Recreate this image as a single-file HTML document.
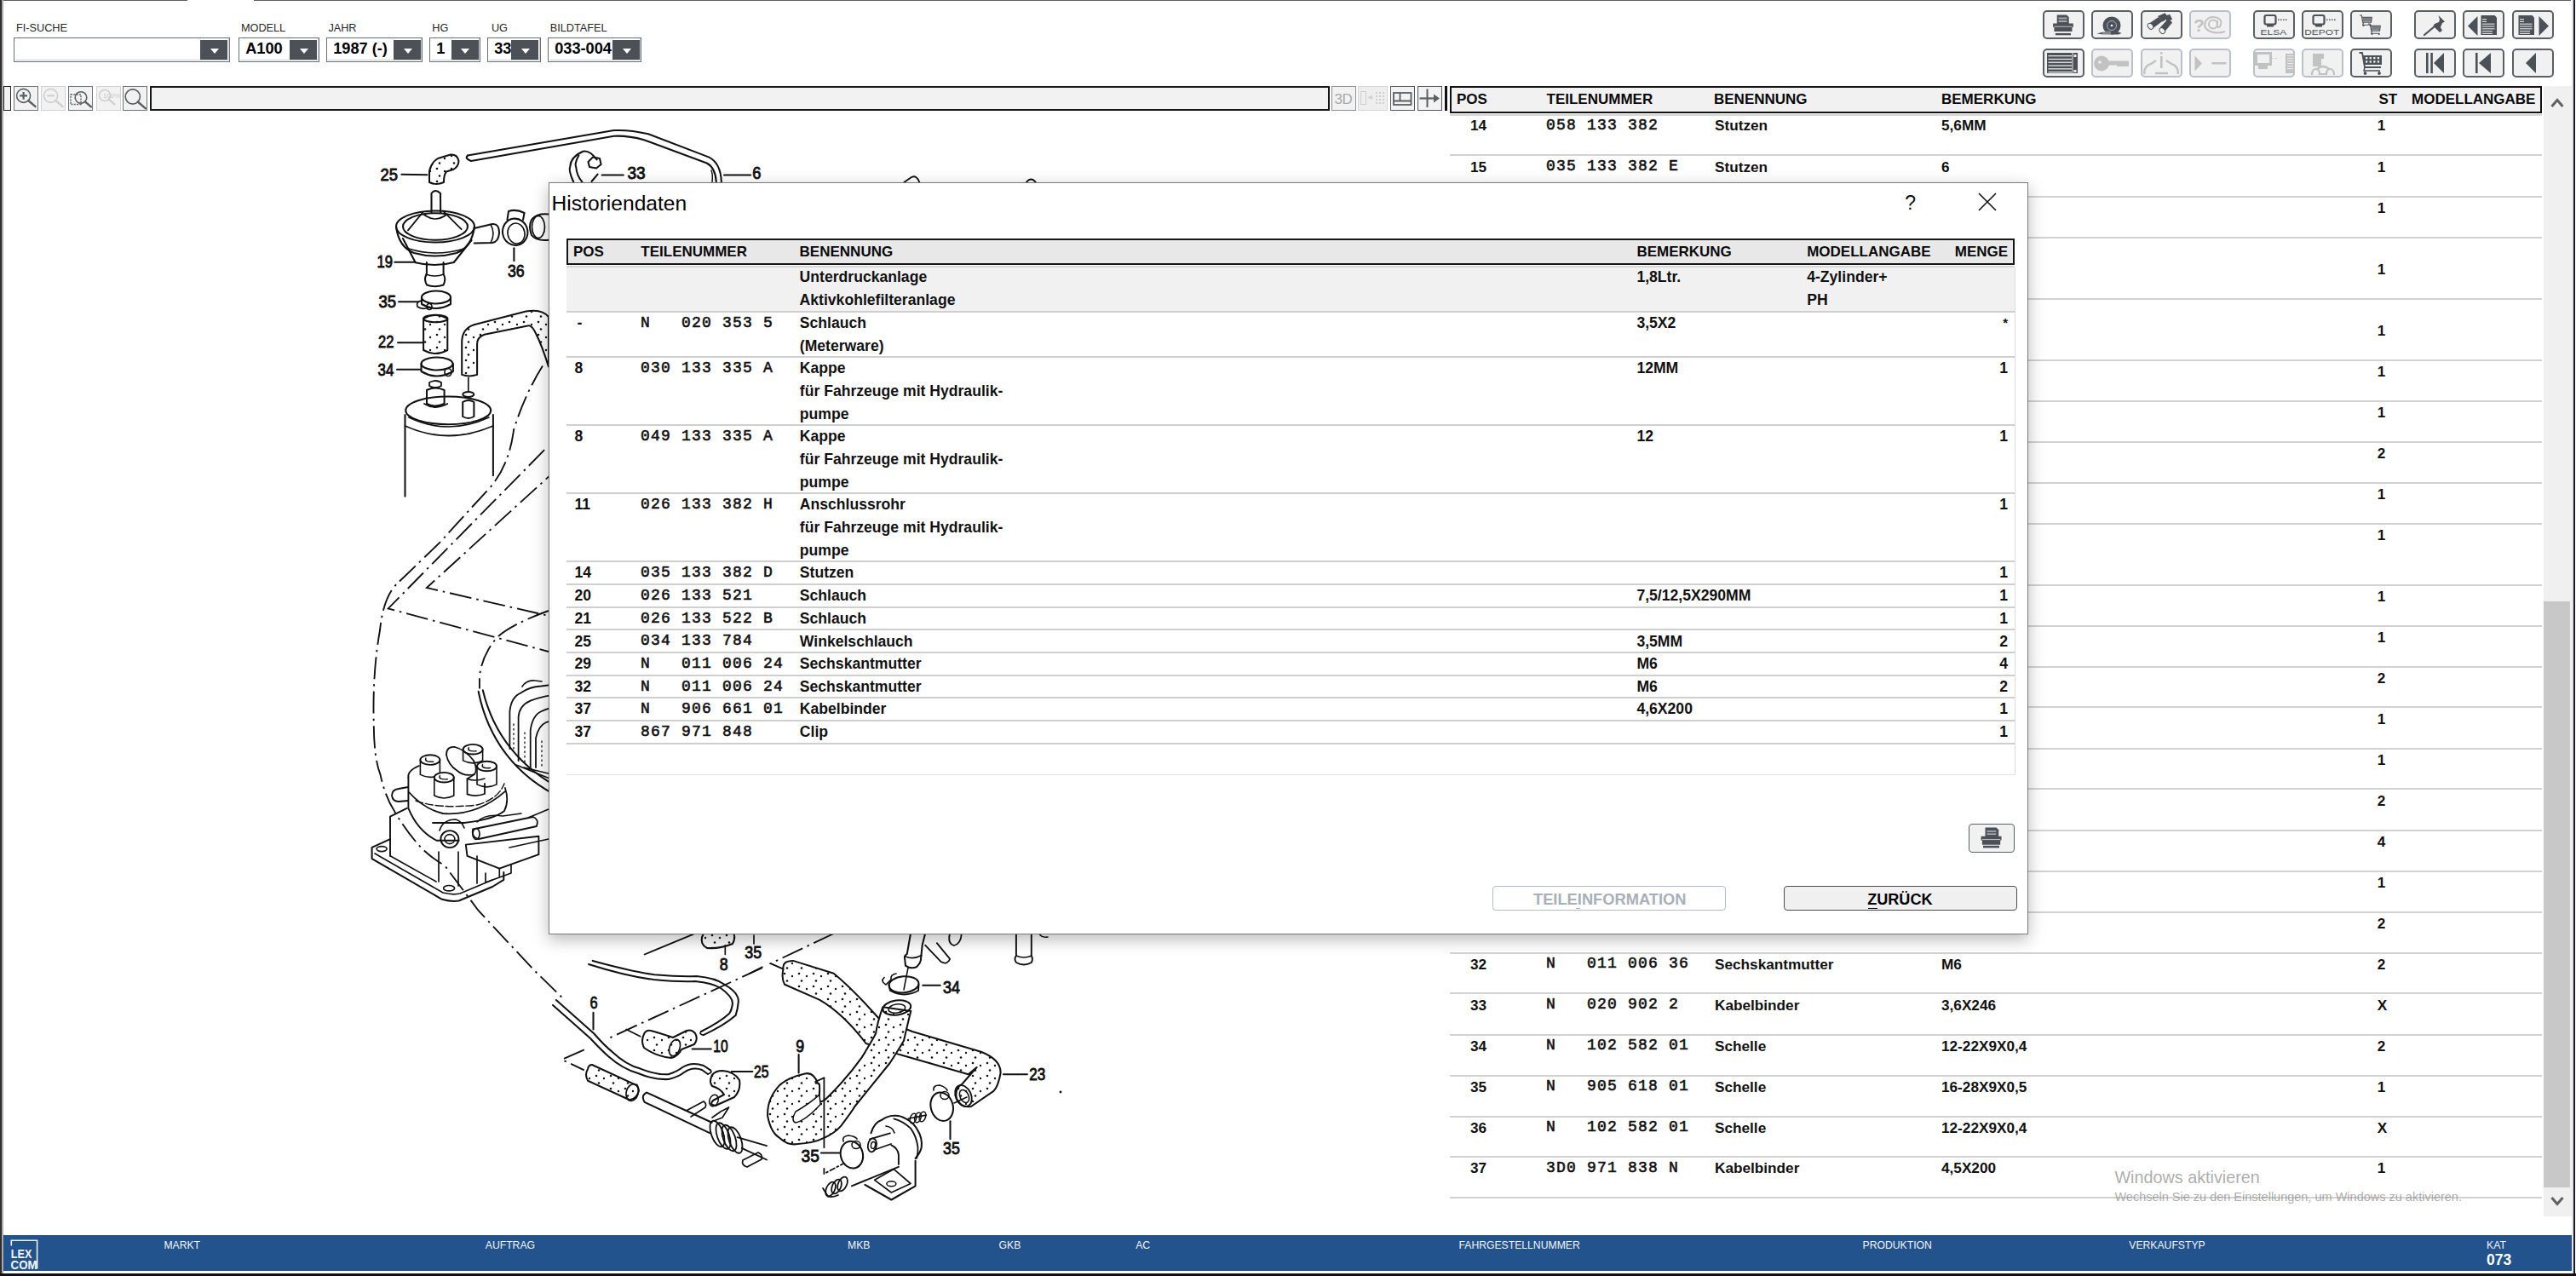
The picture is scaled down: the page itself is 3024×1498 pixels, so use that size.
<!DOCTYPE html>
<html><head><meta charset="utf-8"><title>Historiendaten</title>
<style>
html,body{margin:0;padding:0;background:#fff;}
body{width:3024px;height:1498px;position:relative;overflow:hidden;font-family:'Liberation Sans', sans-serif;}
body>div, body>svg, .a{position:absolute;}
body div{position:absolute;}
</style></head><body>
<div style="left:0px;top:0px;width:2px;height:1495px;background:#2e2e2e"></div><div style="left:2px;top:0px;width:2px;height:1495px;background:#a9a9a9"></div><div style="left:4px;top:0px;width:216px;height:1.3px;background:#5c6064"></div><div style="left:298px;top:0px;width:2720px;height:1.3px;background:#5c6064"></div><div style="left:3018.5px;top:0px;width:2.5px;height:1495px;background:#e4e4e4"></div><div style="left:3021px;top:0px;width:2px;height:1495px;background:#1b1b28"></div><div style="left:0px;top:1495px;width:3024px;height:3px;background:#111"></div><div style="left:19.00px;top:27.45px;font:400 12.7px/12.7px 'Liberation Sans', sans-serif;color:#262626;white-space:pre;">FI-SUCHE</div><div style="left:283.00px;top:27.45px;font:400 12.7px/12.7px 'Liberation Sans', sans-serif;color:#262626;white-space:pre;">MODELL</div><div style="left:385.40px;top:27.45px;font:400 12.7px/12.7px 'Liberation Sans', sans-serif;color:#262626;white-space:pre;">JAHR</div><div style="left:507.30px;top:27.45px;font:400 12.7px/12.7px 'Liberation Sans', sans-serif;color:#262626;white-space:pre;">HG</div><div style="left:576.90px;top:27.45px;font:400 12.7px/12.7px 'Liberation Sans', sans-serif;color:#262626;white-space:pre;">UG</div><div style="left:645.80px;top:27.45px;font:400 12.7px/12.7px 'Liberation Sans', sans-serif;color:#262626;white-space:pre;">BILDTAFEL</div><div style="left:16px;top:43.8px;width:254px;height:29px;border:1.5px solid #6b7074;background:#fff;box-sizing:border-box"></div><div style="left:17.5px;top:45.3px;width:251px;height:26px;border-right:1px solid #cfd2d5;border-bottom:1px solid #cfd2d5;box-sizing:border-box"></div><div style="left:235px;top:46.6px;width:32px;height:23.3px;background:#4b5157"></div><svg style="position:absolute;left:246.7px;top:56.9px;" width="10" height="6" viewBox="0 0 10 6"><path d="M0 0H10L5 6Z" fill="#fff"/></svg><div style="left:280px;top:43.8px;width:95px;height:29px;border:1.5px solid #6b7074;background:#fff;box-sizing:border-box"></div><div style="left:281.5px;top:45.3px;width:92px;height:26px;border-right:1px solid #cfd2d5;border-bottom:1px solid #cfd2d5;box-sizing:border-box"></div><div style="left:281.5px;top:45px;width:58.80000000000001px;height:26px;overflow:hidden"><div style="left:6.7px;top:2.99px;font:700 18.2px/18.2px 'Liberation Sans', sans-serif;color:#000;white-space:pre">A100</div></div><div style="left:340.3px;top:46.6px;width:32px;height:23.3px;background:#4b5157"></div><svg style="position:absolute;left:352.0px;top:56.9px;" width="10" height="6" viewBox="0 0 10 6"><path d="M0 0H10L5 6Z" fill="#fff"/></svg><div style="left:383px;top:43.8px;width:113px;height:29px;border:1.5px solid #6b7074;background:#fff;box-sizing:border-box"></div><div style="left:384.5px;top:45.3px;width:110px;height:26px;border-right:1px solid #cfd2d5;border-bottom:1px solid #cfd2d5;box-sizing:border-box"></div><div style="left:384.5px;top:45px;width:77.5px;height:26px;overflow:hidden"><div style="left:6.7px;top:2.99px;font:700 18.2px/18.2px 'Liberation Sans', sans-serif;color:#000;white-space:pre">1987 (-)</div></div><div style="left:462px;top:46.6px;width:32px;height:23.3px;background:#4b5157"></div><svg style="position:absolute;left:473.7px;top:56.9px;" width="10" height="6" viewBox="0 0 10 6"><path d="M0 0H10L5 6Z" fill="#fff"/></svg><div style="left:504px;top:43.8px;width:60px;height:29px;border:1.5px solid #6b7074;background:#fff;box-sizing:border-box"></div><div style="left:505.5px;top:45.3px;width:57px;height:26px;border-right:1px solid #cfd2d5;border-bottom:1px solid #cfd2d5;box-sizing:border-box"></div><div style="left:505.5px;top:45px;width:24.0px;height:26px;overflow:hidden"><div style="left:6.7px;top:2.99px;font:700 18.2px/18.2px 'Liberation Sans', sans-serif;color:#000;white-space:pre">1</div></div><div style="left:529.5px;top:46.6px;width:32px;height:23.3px;background:#4b5157"></div><svg style="position:absolute;left:541.2px;top:56.9px;" width="10" height="6" viewBox="0 0 10 6"><path d="M0 0H10L5 6Z" fill="#fff"/></svg><div style="left:572px;top:43.8px;width:63px;height:29px;border:1.5px solid #6b7074;background:#fff;box-sizing:border-box"></div><div style="left:573.5px;top:45.3px;width:60px;height:26px;border-right:1px solid #cfd2d5;border-bottom:1px solid #cfd2d5;box-sizing:border-box"></div><div style="left:573.5px;top:45px;width:26.5px;height:26px;overflow:hidden"><div style="left:6.7px;top:2.99px;font:700 18.2px/18.2px 'Liberation Sans', sans-serif;color:#000;white-space:pre">33</div></div><div style="left:600px;top:46.6px;width:32px;height:23.3px;background:#4b5157"></div><svg style="position:absolute;left:611.7px;top:56.9px;" width="10" height="6" viewBox="0 0 10 6"><path d="M0 0H10L5 6Z" fill="#fff"/></svg><div style="left:643px;top:43.8px;width:110px;height:29px;border:1.5px solid #6b7074;background:#fff;box-sizing:border-box"></div><div style="left:644.5px;top:45.3px;width:107px;height:26px;border-right:1px solid #cfd2d5;border-bottom:1px solid #cfd2d5;box-sizing:border-box"></div><div style="left:644.5px;top:45px;width:74.5px;height:26px;overflow:hidden"><div style="left:6.7px;top:2.99px;font:700 18.2px/18.2px 'Liberation Sans', sans-serif;color:#000;white-space:pre">033-004</div></div><div style="left:719px;top:46.6px;width:32px;height:23.3px;background:#4b5157"></div><svg style="position:absolute;left:730.7px;top:56.9px;" width="10" height="6" viewBox="0 0 10 6"><path d="M0 0H10L5 6Z" fill="#fff"/></svg><div style="left:4.4px;top:101.3px;width:9px;height:28.4px;border:1.3px solid #222;background:#f2f2f2;box-sizing:border-box"></div><div style="left:16.4px;top:101.3px;width:29px;height:28.4px;border:1.5px solid #6e7377;background:#f2f2f2;box-sizing:border-box"></div><div style="left:48.3px;top:101.3px;width:29px;height:28.4px;border:1.5px solid #d2d2d2;background:#f2f2f2;box-sizing:border-box"></div><div style="left:80.4px;top:101.3px;width:29px;height:28.4px;border:1.5px solid #6e7377;background:#f2f2f2;box-sizing:border-box"></div><div style="left:112.5px;top:101.3px;width:29px;height:28.4px;border:1.5px solid #d2d2d2;background:#f2f2f2;box-sizing:border-box"></div><div style="left:144.2px;top:101.3px;width:29px;height:28.4px;border:1.5px solid #6e7377;background:#f2f2f2;box-sizing:border-box"></div><svg style="position:absolute;left:16.4px;top:101.3px;" width="29" height="28.4" viewBox="0 0 29 28.4"><circle cx="11.6" cy="11.4" r="8" fill="none" stroke="#5a5f63" stroke-width="1.6"/><path d="M17.2 17.0L25.6 24.2" stroke="#5a5f63" stroke-width="2.4" stroke-linecap="round"/><path d="M7.2 11.4H16M11.6 7V15.8" stroke="#5a5f63" stroke-width="2.2"/></svg><svg style="position:absolute;left:48.3px;top:101.3px;" width="29" height="28.4" viewBox="0 0 29 28.4"><circle cx="11.6" cy="11.4" r="8" fill="none" stroke="#cfcfcf" stroke-width="1.6"/><path d="M17.2 17.0L25.6 24.2" stroke="#cfcfcf" stroke-width="2.4" stroke-linecap="round"/><path d="M7.2 11.4H16" stroke="#cfcfcf" stroke-width="2"/></svg><svg style="position:absolute;left:80.4px;top:101.3px;" width="29" height="28.4" viewBox="0 0 29 28.4"><circle cx="15" cy="13.5" r="6.8" fill="none" stroke="#5a5f63" stroke-width="1.6"/><path d="M19.8 18.3L26.9 24.4" stroke="#5a5f63" stroke-width="2.4" stroke-linecap="round"/><rect x="3" y="10" width="12" height="11.5" fill="none" stroke="#5a5f63" stroke-width="1.4" stroke-dasharray="2 1.3"/></svg><svg style="position:absolute;left:112.5px;top:101.3px;" width="29" height="28.4" viewBox="0 0 29 28.4"><circle cx="10" cy="11" r="6.5" fill="none" stroke="#d0d0d0" stroke-width="1.6"/><path d="M14.6 15.6L21.4 21.4" stroke="#d0d0d0" stroke-width="2.4" stroke-linecap="round"/><text x="8" y="14.5" font-family="Liberation Sans" font-size="8" fill="#c8c8c8">100%</text></svg><svg style="position:absolute;left:144.2px;top:101.3px;" width="29" height="28.4" viewBox="0 0 29 28.4"><circle cx="11.8" cy="12.5" r="8.6" fill="none" stroke="#5a5f63" stroke-width="1.6"/><path d="M17.8 18.5L26.9 26.3" stroke="#5a5f63" stroke-width="2.4" stroke-linecap="round"/></svg><div style="left:176.3px;top:101.3px;width:1385px;height:28.4px;border:2px solid #151515;background:#f2f2f2;box-sizing:border-box"></div><div style="left:1563px;top:101.3px;width:29px;height:28.4px;border:1.5px solid #8e9194;background:#f2f2f2;box-sizing:border-box"></div><svg style="position:absolute;left:1563px;top:101.3px;" width="29" height="28.4" viewBox="0 0 29 28.4"><text x="3.5" y="21" font-family="Liberation Sans" font-size="17" fill="#a7a9ab" style="letter-spacing:-0.5px">3D</text></svg><div style="left:1594px;top:101.3px;width:35px;height:28.4px;border:1.5px solid #d6d6d6;background:#eeeeee;box-sizing:border-box"></div><svg style="position:absolute;left:1594px;top:101.3px;" width="35" height="28.4" viewBox="0 0 35 28.4"><rect x="3.5" y="6.5" width="6" height="15" fill="none" stroke="#cfcfcf" stroke-width="1"/><path d="M12 13.5H16M15 11.5L17 13.5L15 15.5" stroke="#cfcfcf" stroke-width="1.4" fill="none"/><rect x="21" y="7" width="2" height="2" fill="#cfcfcf"/><rect x="21" y="11" width="2" height="2" fill="#cfcfcf"/><rect x="21" y="15" width="2" height="2" fill="#cfcfcf"/><rect x="21" y="19" width="2" height="2" fill="#cfcfcf"/><rect x="25" y="7" width="2" height="2" fill="#cfcfcf"/><rect x="25" y="11" width="2" height="2" fill="#cfcfcf"/><rect x="25" y="15" width="2" height="2" fill="#cfcfcf"/><rect x="25" y="19" width="2" height="2" fill="#cfcfcf"/><rect x="29" y="7" width="2" height="2" fill="#cfcfcf"/><rect x="29" y="11" width="2" height="2" fill="#cfcfcf"/><rect x="29" y="15" width="2" height="2" fill="#cfcfcf"/><rect x="29" y="19" width="2" height="2" fill="#cfcfcf"/></svg><div style="left:1632px;top:101.3px;width:29px;height:28.4px;border:1.5px solid #55595d;background:#f2f2f2;box-sizing:border-box"></div><svg style="position:absolute;left:1632px;top:101.3px;" width="29" height="28.4" viewBox="0 0 29 28.4"><rect x="4" y="8" width="20.5" height="14" fill="none" stroke="#5a5f63" stroke-width="1.8"/><path d="M4 17.5H24.5M11.5 8V17.5" stroke="#5a5f63" stroke-width="1.8"/></svg><div style="left:1664px;top:101.3px;width:29px;height:28.4px;border:1.5px solid #55595d;background:#f2f2f2;box-sizing:border-box"></div><svg style="position:absolute;left:1664px;top:101.3px;" width="29" height="28.4" viewBox="0 0 29 28.4"><path d="M11.5 3.5V25" stroke="#5a5f63" stroke-width="2"/><path d="M2.5 14.5H21" stroke="#5a5f63" stroke-width="2.2"/><path d="M19 9.5L26 14.5L19 19.5Z" fill="#5a5f63"/></svg><div style="left:1695.5px;top:101.3px;width:3px;height:28.4px;background:#111"></div><div style="left:2397.5px;top:11.7px;width:49px;height:34.3px;border:2px solid #5b6065;border-radius:5px;background:#f1f1f1;box-sizing:border-box"></div><svg style="position:absolute;left:2397.5px;top:11.7px;" width="49" height="34.3" viewBox="0 0 49 34.3"><path d="M16.7 5.4H28L30.7 8V16.6H16.7Z" fill="#4b5157"/><rect x="18.5" y="8.5" width="10" height="2" fill="#a5a9ad"/><rect x="18.5" y="12" width="10" height="2" fill="#a5a9ad"/><path d="M12.1 15.5H35.8V20H34.5V25H13.4V20H12.1Z" fill="#4b5157"/><path d="M13.4 19.2H34.5" stroke="#cfd1d3" stroke-width="0.9"/><rect x="14.9" y="26.9" width="18.1" height="2.4" fill="#4b5157"/></svg><div style="left:2455px;top:11.7px;width:49px;height:34.3px;border:2px solid #5b6065;border-radius:5px;background:#f1f1f1;box-sizing:border-box"></div><svg style="position:absolute;left:2455px;top:11.7px;" width="49" height="34.3" viewBox="0 0 49 34.3"><circle cx="24" cy="18" r="10.5" fill="#4b5157"/><circle cx="24" cy="18" r="5.5" fill="none" stroke="#b9bcbf" stroke-width="0.9"/><circle cx="24" cy="18" r="1.3" fill="#fff"/><path d="M6.5 27.5L14 25.5H32L35.5 27L32 28.5H14Z" fill="#4b5157"/><path d="M14 24.5V30.5" stroke="#e8e8e8" stroke-width="0.7"/><path d="M16 24.5V30.5" stroke="#e8e8e8" stroke-width="0.7"/><path d="M18 24.5V30.5" stroke="#e8e8e8" stroke-width="0.7"/><path d="M20 24.5V30.5" stroke="#e8e8e8" stroke-width="0.7"/><path d="M22 24.5V30.5" stroke="#e8e8e8" stroke-width="0.7"/></svg><div style="left:2512.5px;top:11.7px;width:49px;height:34.3px;border:2px solid #5b6065;border-radius:5px;background:#f1f1f1;box-sizing:border-box"></div><svg style="position:absolute;left:2512.5px;top:11.7px;" width="49" height="34.3" viewBox="0 0 49 34.3"><g transform="translate(1 -3.5) scale(0.95)"><path d="M8 21L21 12L26 17L14 26Z" fill="#4b5157"/><path d="M23 25L33 14L38 19L28 31Z" fill="#4b5157"/><path d="M20 11L29 7L33 13L26 18Z" fill="#4b5157"/><path d="M27 11L35 9L38 15L32 18Z" fill="#4b5157"/><ellipse cx="11" cy="23.5" rx="3" ry="4" transform="rotate(-40 11 23.5)" fill="#f1f1f1" stroke="#4b5157" stroke-width="1"/><ellipse cx="25.5" cy="29" rx="3" ry="4" transform="rotate(-40 25.5 29)" fill="#f1f1f1" stroke="#4b5157" stroke-width="1"/></g></svg><div style="left:2570px;top:11.7px;width:49px;height:34.3px;border:2px solid #b9c0c8;border-radius:5px;background:#f1f1f1;box-sizing:border-box"></div><svg style="position:absolute;left:2570px;top:11.7px;" width="49" height="34.3" viewBox="0 0 49 34.3"><text x="5" y="25" font-family="Liberation Sans" font-size="21" font-weight="700" fill="#c2c2c2">?</text><circle cx="28" cy="16.5" r="5" fill="none" stroke="#c2c2c2" stroke-width="2"/><path d="M33 12V19Q34 21 36 19Q40 12 33 9Q24 6 19 13Q16 22 25 25Q33 28 42 25" fill="none" stroke="#c2c2c2" stroke-width="2"/></svg><div style="left:2644.5px;top:11.7px;width:49px;height:34.3px;border:2px solid #5b6065;border-radius:5px;background:#f1f1f1;box-sizing:border-box"></div><svg style="position:absolute;left:2644.5px;top:11.7px;" width="49" height="34.3" viewBox="0 0 49 34.3"><rect x="13.5" y="6" width="13" height="10.5" rx="2" fill="none" stroke="#4b5157" stroke-width="2.2"/><rect x="16" y="17" width="8" height="2.5" fill="#4b5157"/><rect x="29" y="10.5" width="1.6" height="1.4" fill="#4b5157"/><rect x="32" y="10.5" width="1.6" height="1.4" fill="#4b5157"/><rect x="35" y="10.5" width="1.6" height="1.4" fill="#4b5157"/><rect x="38" y="10.5" width="1.6" height="1.4" fill="#4b5157"/><text x="8.6" y="29" font-family="Liberation Sans" font-size="9" fill="#4b5157" textLength="30.6" lengthAdjust="spacingAndGlyphs">ELSA</text></svg><div style="left:2702px;top:11.7px;width:49px;height:34.3px;border:2px solid #5b6065;border-radius:5px;background:#f1f1f1;box-sizing:border-box"></div><svg style="position:absolute;left:2702px;top:11.7px;" width="49" height="34.3" viewBox="0 0 49 34.3"><rect x="13.5" y="6" width="13" height="10.5" rx="2" fill="none" stroke="#4b5157" stroke-width="2.2"/><rect x="16" y="17" width="8" height="2.5" fill="#4b5157"/><rect x="29" y="10.5" width="1.6" height="1.4" fill="#4b5157"/><rect x="32" y="10.5" width="1.6" height="1.4" fill="#4b5157"/><rect x="35" y="10.5" width="1.6" height="1.4" fill="#4b5157"/><rect x="38" y="10.5" width="1.6" height="1.4" fill="#4b5157"/><text x="3.2" y="29" font-family="Liberation Sans" font-size="9" fill="#4b5157" textLength="41" lengthAdjust="spacingAndGlyphs">DEPOT</text></svg><div style="left:2759px;top:11.7px;width:49px;height:34.3px;border:2px solid #5b6065;border-radius:5px;background:#f1f1f1;box-sizing:border-box"></div><svg style="position:absolute;left:2759px;top:11.7px;" width="49" height="34.3" viewBox="0 0 49 34.3"><g transform="translate(11 6) scale(0.75)"><path d="M0 0H3L5 11H18L19 3H4" fill="none" stroke="#4b5157" stroke-width="1.6"/><rect x="5" y="3" width="13" height="7" fill="#4b5157" opacity="0.7"/><path d="M6 11L5 15H18" fill="none" stroke="#4b5157" stroke-width="1.5"/><circle cx="6" cy="16" r="1.4" fill="#4b5157"/><circle cx="17" cy="16" r="1.4" fill="#4b5157"/></g><g transform="translate(21 16) scale(0.75)"><path d="M0 0H3L5 11H18L19 3H4" fill="none" stroke="#4b5157" stroke-width="1.6"/><rect x="5" y="3" width="13" height="7" fill="#4b5157" opacity="0.7"/><path d="M6 11L5 15H18" fill="none" stroke="#4b5157" stroke-width="1.5"/><circle cx="6" cy="16" r="1.4" fill="#4b5157"/><circle cx="17" cy="16" r="1.4" fill="#4b5157"/></g></svg><div style="left:2834px;top:11.7px;width:49px;height:34.3px;border:2px solid #5b6065;border-radius:5px;background:#f1f1f1;box-sizing:border-box"></div><svg style="position:absolute;left:2834px;top:11.7px;" width="49" height="34.3" viewBox="0 0 49 34.3"><path d="M28.5 6L36 13.5L33 15L31 20L33 24L30 26L22.5 18.5L24 16L29 14L30 11Z" fill="#4b5157"/><path d="M12 29L24 19" stroke="#4b5157" stroke-width="2.2" stroke-linecap="round"/></svg><div style="left:2891px;top:11.7px;width:49px;height:34.3px;border:2px solid #5b6065;border-radius:5px;background:#f1f1f1;box-sizing:border-box"></div><svg style="position:absolute;left:2891px;top:11.7px;" width="49" height="34.3" viewBox="0 0 49 34.3"><path d="M17.5 7V30L6 18.5Z" fill="#4b5157"/><path d="M21.5 6H37.5 L40.0 8.5V29H21.5Z" fill="#4b5157"/><rect x="23.0" y="10.0" width="5" height="1.2" fill="#d9dadb"/><rect x="23.0" y="12.8" width="5" height="1.2" fill="#d9dadb"/><rect x="23.0" y="15.6" width="14.5" height="1.2" fill="#d9dadb"/><rect x="23.0" y="18.4" width="14.5" height="1.2" fill="#d9dadb"/><rect x="23.0" y="21.2" width="14.5" height="1.2" fill="#d9dadb"/><rect x="23.0" y="24.0" width="12" height="1.2" fill="#d9dadb"/><rect x="23.0" y="26.8" width="12" height="1.2" fill="#d9dadb"/></svg><div style="left:2949px;top:11.7px;width:49px;height:34.3px;border:2px solid #5b6065;border-radius:5px;background:#f1f1f1;box-sizing:border-box"></div><svg style="position:absolute;left:2949px;top:11.7px;" width="49" height="34.3" viewBox="0 0 49 34.3"><path d="M7.5 6H23.5 L26.0 8.5V29H7.5Z" fill="#4b5157"/><rect x="9.0" y="10.0" width="5" height="1.2" fill="#d9dadb"/><rect x="9.0" y="12.8" width="5" height="1.2" fill="#d9dadb"/><rect x="9.0" y="15.6" width="14.5" height="1.2" fill="#d9dadb"/><rect x="9.0" y="18.4" width="14.5" height="1.2" fill="#d9dadb"/><rect x="9.0" y="21.2" width="14.5" height="1.2" fill="#d9dadb"/><rect x="9.0" y="24.0" width="12" height="1.2" fill="#d9dadb"/><rect x="9.0" y="26.8" width="12" height="1.2" fill="#d9dadb"/><path d="M31.5 7V30L43 18.5Z" fill="#4b5157"/></svg><div style="left:2397.5px;top:57.2px;width:49px;height:34.3px;border:2px solid #5b6065;border-radius:5px;background:#f1f1f1;box-sizing:border-box"></div><svg style="position:absolute;left:2397.5px;top:57.2px;" width="49" height="34.3" viewBox="0 0 49 34.3"><rect x="5" y="5" width="36" height="24" fill="#4b5157"/><rect x="6.5" y="8.0" width="27.5" height="1.3" fill="#e8e8e8"/><rect x="6.5" y="11.8" width="27.5" height="1.3" fill="#e8e8e8"/><rect x="6.5" y="15.6" width="27.5" height="1.3" fill="#e8e8e8"/><rect x="6.5" y="19.4" width="27.5" height="1.3" fill="#e8e8e8"/><rect x="6.5" y="23.2" width="27.5" height="1.3" fill="#e8e8e8"/><rect x="6.5" y="27.0" width="27.5" height="1.3" fill="#e8e8e8"/><rect x="34.5" y="5" width="1" height="24" fill="#e8e8e8"/><rect x="36.5" y="7" width="3" height="3" fill="#e8e8e8"/><rect x="36.5" y="25" width="3" height="3" fill="#e8e8e8"/></svg><div style="left:2455px;top:57.2px;width:49px;height:34.3px;border:2px solid #b9c0c8;border-radius:5px;background:#f1f1f1;box-sizing:border-box"></div><svg style="position:absolute;left:2455px;top:57.2px;" width="49" height="34.3" viewBox="0 0 49 34.3"><circle cx="12" cy="17.5" r="9" fill="#c2c2c2"/><circle cx="10" cy="16" r="1.8" fill="#f1f1f1"/><rect x="19" y="14.5" width="25" height="5" fill="#c2c2c2"/><rect x="30" y="19" width="14" height="2" fill="#c2c2c2"/></svg><div style="left:2512.5px;top:57.2px;width:49px;height:34.3px;border:2px solid #b9c0c8;border-radius:5px;background:#f1f1f1;box-sizing:border-box"></div><svg style="position:absolute;left:2512.5px;top:57.2px;" width="49" height="34.3" viewBox="0 0 49 34.3"><path d="M4 30Q4 20 12 18L18 14M44 30Q44 20 36 18L30 14M17 29H32" fill="none" stroke="#c2c2c2" stroke-width="2.4"/><rect x="23" y="9" width="2.6" height="14" fill="#c2c2c2"/><circle cx="24.3" cy="5.5" r="1.4" fill="#c2c2c2"/></svg><div style="left:2570px;top:57.2px;width:49px;height:34.3px;border:2px solid #b9c0c8;border-radius:5px;background:#f1f1f1;box-sizing:border-box"></div><svg style="position:absolute;left:2570px;top:57.2px;" width="49" height="34.3" viewBox="0 0 49 34.3"><path d="M6.5 8.5L15 17.5L6.5 26.5Z" fill="#c2c2c2"/><rect x="26.5" y="16" width="17" height="2.5" fill="#c2c2c2"/></svg><div style="left:2644.5px;top:57.2px;width:49px;height:34.3px;border:2px solid #b9c0c8;border-radius:5px;background:#f1f1f1;box-sizing:border-box"></div><svg style="position:absolute;left:2644.5px;top:57.2px;" width="49" height="34.3" viewBox="0 0 49 34.3"><rect x="3.5" y="5.5" width="17" height="13" fill="none" stroke="#c2c2c2" stroke-width="3"/><rect x="6" y="18" width="11" height="6" fill="#c2c2c2"/><rect x="38" y="6" width="11" height="23" fill="#c2c2c2"/><rect x="40" y="8" width="7" height="1.2" fill="#e8e8e8"/><rect x="40" y="11" width="7" height="1.2" fill="#e8e8e8"/><rect x="40" y="14" width="7" height="1.2" fill="#e8e8e8"/><rect x="40" y="17" width="7" height="1.2" fill="#e8e8e8"/><rect x="40" y="20" width="7" height="1.2" fill="#e8e8e8"/><rect x="40" y="23" width="7" height="1.2" fill="#e8e8e8"/><rect x="22" y="11" width="1.5" height="1" fill="#c2c2c2"/><rect x="26" y="11" width="1.5" height="1" fill="#c2c2c2"/></svg><div style="left:2702px;top:57.2px;width:49px;height:34.3px;border:2px solid #b9c0c8;border-radius:5px;background:#f1f1f1;box-sizing:border-box"></div><svg style="position:absolute;left:2702px;top:57.2px;" width="49" height="34.3" viewBox="0 0 49 34.3"><path d="M13 6H26V12H23V21H13Z" fill="#c2c2c2"/><path d="M12 31Q12 24 17 24Q21 24 21 31M20 30H30M29 31Q29 24 33 24Q38 24 38 31" fill="none" stroke="#c2c2c2" stroke-width="2.2"/><path d="M17 25Q25 17 33 25" fill="none" stroke="#c2c2c2" stroke-width="2.2"/></svg><div style="left:2759px;top:57.2px;width:49px;height:34.3px;border:2px solid #5b6065;border-radius:5px;background:#f1f1f1;box-sizing:border-box"></div><svg style="position:absolute;left:2759px;top:57.2px;" width="49" height="34.3" viewBox="0 0 49 34.3"><path d="M10.5 5H14L17 22H36" fill="none" stroke="#4b5157" stroke-width="1.8"/><path d="M15 8H37V19H17Z" fill="#4b5157"/><rect x="18.0" y="10.0" width="2.3" height="2.3" fill="#f1f1f1"/><rect x="18.0" y="14.3" width="2.3" height="2.3" fill="#f1f1f1"/><rect x="22.6" y="10.0" width="2.3" height="2.3" fill="#f1f1f1"/><rect x="22.6" y="14.3" width="2.3" height="2.3" fill="#f1f1f1"/><rect x="27.2" y="10.0" width="2.3" height="2.3" fill="#f1f1f1"/><rect x="27.2" y="14.3" width="2.3" height="2.3" fill="#f1f1f1"/><rect x="31.8" y="10.0" width="2.3" height="2.3" fill="#f1f1f1"/><rect x="31.8" y="14.3" width="2.3" height="2.3" fill="#f1f1f1"/><path d="M17 22L16 26H35" fill="none" stroke="#4b5157" stroke-width="1.5"/><circle cx="17.5" cy="29" r="1.9" fill="#4b5157"/><circle cx="34" cy="29" r="1.9" fill="#4b5157"/></svg><div style="left:2834px;top:57.2px;width:49px;height:34.3px;border:2px solid #5b6065;border-radius:5px;background:#f1f1f1;box-sizing:border-box"></div><svg style="position:absolute;left:2834px;top:57.2px;" width="49" height="34.3" viewBox="0 0 49 34.3"><rect x="14" y="5" width="2.6" height="24" fill="#4b5157"/><rect x="19.3" y="5" width="2.6" height="24" fill="#4b5157"/><path d="M35 5V29L23 17Z" fill="#4b5157"/></svg><div style="left:2891px;top:57.2px;width:49px;height:34.3px;border:2px solid #5b6065;border-radius:5px;background:#f1f1f1;box-sizing:border-box"></div><svg style="position:absolute;left:2891px;top:57.2px;" width="49" height="34.3" viewBox="0 0 49 34.3"><rect x="15" y="5" width="2.6" height="24" fill="#4b5157"/><path d="M33 5V29L19 17Z" fill="#4b5157"/></svg><div style="left:2949px;top:57.2px;width:49px;height:34.3px;border:2px solid #5b6065;border-radius:5px;background:#f1f1f1;box-sizing:border-box"></div><svg style="position:absolute;left:2949px;top:57.2px;" width="49" height="34.3" viewBox="0 0 49 34.3"><path d="M28 5V29L16 17Z" fill="#4b5157"/></svg><div style="left:1701.5px;top:101px;width:1282.5px;height:31.6px;border:2px solid #111;background:#f1f1f1;box-sizing:border-box"></div><div style="left:1710.00px;top:108.41px;font:700 17px/17px 'Liberation Sans', sans-serif;color:#0a0a0a;white-space:pre;">POS</div><div style="left:1815.50px;top:108.41px;font:700 17px/17px 'Liberation Sans', sans-serif;color:#0a0a0a;white-space:pre;">TEILENUMMER</div><div style="left:2012.00px;top:108.41px;font:700 17px/17px 'Liberation Sans', sans-serif;color:#0a0a0a;white-space:pre;">BENENNUNG</div><div style="left:2279.00px;top:108.41px;font:700 17px/17px 'Liberation Sans', sans-serif;color:#0a0a0a;white-space:pre;">BEMERKUNG</div><div style="left:2792.50px;top:108.41px;font:700 17px/17px 'Liberation Sans', sans-serif;color:#0a0a0a;white-space:pre;">ST</div><div style="left:2831.00px;top:108.41px;font:700 17px/17px 'Liberation Sans', sans-serif;color:#0a0a0a;white-space:pre;">MODELLANGABE</div><div style="left:1701.5px;top:133.5px;width:1282.5px;height:2.2px;background:#d6d6d6"></div><div style="left:1726.00px;top:139.44px;font:700 17.2px/17.2px 'Liberation Sans', sans-serif;color:#111;white-space:pre;">14</div><div style="left:1815.00px;top:138.01px;font:400 18px/18px 'Liberation Mono', monospace;color:#111;white-space:pre;letter-spacing:1.2px;-webkit-text-stroke:0.6px #111;">058 133 382</div><div style="left:2013.00px;top:139.44px;font:700 17.2px/17.2px 'Liberation Sans', sans-serif;color:#111;white-space:pre;">Stutzen</div><div style="left:2279.00px;top:139.44px;font:700 17.2px/17.2px 'Liberation Sans', sans-serif;color:#111;white-space:pre;">5,6MM</div><div style="left:2790.80px;top:139.44px;font:700 17.2px/17.2px 'Liberation Sans', sans-serif;color:#111;white-space:pre;">1</div><div style="left:1701.5px;top:181px;width:1282.5px;height:2px;background:#d2d2d2"></div><div style="left:1726.00px;top:187.54px;font:700 17.2px/17.2px 'Liberation Sans', sans-serif;color:#111;white-space:pre;">15</div><div style="left:1815.00px;top:186.11px;font:400 18px/18px 'Liberation Mono', monospace;color:#111;white-space:pre;letter-spacing:1.2px;-webkit-text-stroke:0.6px #111;">035 133 382 E</div><div style="left:2013.00px;top:187.54px;font:700 17.2px/17.2px 'Liberation Sans', sans-serif;color:#111;white-space:pre;">Stutzen</div><div style="left:2279.00px;top:187.54px;font:700 17.2px/17.2px 'Liberation Sans', sans-serif;color:#111;white-space:pre;">6</div><div style="left:2790.80px;top:187.54px;font:700 17.2px/17.2px 'Liberation Sans', sans-serif;color:#111;white-space:pre;">1</div><div style="left:1701.5px;top:230px;width:1282.5px;height:2px;background:#d2d2d2"></div><div style="left:2790.80px;top:236.04px;font:700 17.2px/17.2px 'Liberation Sans', sans-serif;color:#111;white-space:pre;">1</div><div style="left:1701.5px;top:278px;width:1282.5px;height:2px;background:#d2d2d2"></div><div style="left:2790.80px;top:308.14px;font:700 17.2px/17.2px 'Liberation Sans', sans-serif;color:#111;white-space:pre;">1</div><div style="left:1701.5px;top:350px;width:1282.5px;height:2px;background:#d2d2d2"></div><div style="left:2790.80px;top:379.84px;font:700 17.2px/17.2px 'Liberation Sans', sans-serif;color:#111;white-space:pre;">1</div><div style="left:1701.5px;top:422px;width:1282.5px;height:2px;background:#d2d2d2"></div><div style="left:2790.80px;top:428.04px;font:700 17.2px/17.2px 'Liberation Sans', sans-serif;color:#111;white-space:pre;">1</div><div style="left:1701.5px;top:470px;width:1282.5px;height:2px;background:#d2d2d2"></div><div style="left:2790.80px;top:476.14px;font:700 17.2px/17.2px 'Liberation Sans', sans-serif;color:#111;white-space:pre;">1</div><div style="left:1701.5px;top:518px;width:1282.5px;height:2px;background:#d2d2d2"></div><div style="left:2790.80px;top:523.74px;font:700 17.2px/17.2px 'Liberation Sans', sans-serif;color:#111;white-space:pre;">2</div><div style="left:1701.5px;top:566px;width:1282.5px;height:2px;background:#d2d2d2"></div><div style="left:2790.80px;top:571.84px;font:700 17.2px/17.2px 'Liberation Sans', sans-serif;color:#111;white-space:pre;">1</div><div style="left:1701.5px;top:614px;width:1282.5px;height:2px;background:#d2d2d2"></div><div style="left:2790.80px;top:619.94px;font:700 17.2px/17.2px 'Liberation Sans', sans-serif;color:#111;white-space:pre;">1</div><div style="left:1701.5px;top:686px;width:1282.5px;height:2px;background:#d2d2d2"></div><div style="left:2790.80px;top:691.84px;font:700 17.2px/17.2px 'Liberation Sans', sans-serif;color:#111;white-space:pre;">1</div><div style="left:1701.5px;top:734px;width:1282.5px;height:2px;background:#d2d2d2"></div><div style="left:2790.80px;top:740.04px;font:700 17.2px/17.2px 'Liberation Sans', sans-serif;color:#111;white-space:pre;">1</div><div style="left:1701.5px;top:782px;width:1282.5px;height:2px;background:#d2d2d2"></div><div style="left:2790.80px;top:787.84px;font:700 17.2px/17.2px 'Liberation Sans', sans-serif;color:#111;white-space:pre;">2</div><div style="left:1701.5px;top:829px;width:1282.5px;height:2px;background:#d2d2d2"></div><div style="left:2790.80px;top:835.64px;font:700 17.2px/17.2px 'Liberation Sans', sans-serif;color:#111;white-space:pre;">1</div><div style="left:1701.5px;top:878px;width:1282.5px;height:2px;background:#d2d2d2"></div><div style="left:2790.80px;top:883.84px;font:700 17.2px/17.2px 'Liberation Sans', sans-serif;color:#111;white-space:pre;">1</div><div style="left:1701.5px;top:925px;width:1282.5px;height:2px;background:#d2d2d2"></div><div style="left:2790.80px;top:931.64px;font:700 17.2px/17.2px 'Liberation Sans', sans-serif;color:#111;white-space:pre;">2</div><div style="left:1701.5px;top:974px;width:1282.5px;height:2px;background:#d2d2d2"></div><div style="left:2790.80px;top:979.94px;font:700 17.2px/17.2px 'Liberation Sans', sans-serif;color:#111;white-space:pre;">4</div><div style="left:1701.5px;top:1022px;width:1282.5px;height:2px;background:#d2d2d2"></div><div style="left:2790.80px;top:1027.74px;font:700 17.2px/17.2px 'Liberation Sans', sans-serif;color:#111;white-space:pre;">1</div><div style="left:1701.5px;top:1070px;width:1282.5px;height:2px;background:#d2d2d2"></div><div style="left:2790.80px;top:1075.94px;font:700 17.2px/17.2px 'Liberation Sans', sans-serif;color:#111;white-space:pre;">2</div><div style="left:1701.5px;top:1118px;width:1282.5px;height:2px;background:#d2d2d2"></div><div style="left:1726.00px;top:1123.74px;font:700 17.2px/17.2px 'Liberation Sans', sans-serif;color:#111;white-space:pre;">32</div><div style="left:1815.00px;top:1122.31px;font:400 18px/18px 'Liberation Mono', monospace;color:#111;white-space:pre;letter-spacing:1.2px;-webkit-text-stroke:0.6px #111;">N   011 006 36</div><div style="left:2013.00px;top:1123.74px;font:700 17.2px/17.2px 'Liberation Sans', sans-serif;color:#111;white-space:pre;">Sechskantmutter</div><div style="left:2279.00px;top:1123.74px;font:700 17.2px/17.2px 'Liberation Sans', sans-serif;color:#111;white-space:pre;">M6</div><div style="left:2790.80px;top:1123.74px;font:700 17.2px/17.2px 'Liberation Sans', sans-serif;color:#111;white-space:pre;">2</div><div style="left:1701.5px;top:1165px;width:1282.5px;height:2px;background:#d2d2d2"></div><div style="left:1726.00px;top:1171.64px;font:700 17.2px/17.2px 'Liberation Sans', sans-serif;color:#111;white-space:pre;">33</div><div style="left:1815.00px;top:1170.21px;font:400 18px/18px 'Liberation Mono', monospace;color:#111;white-space:pre;letter-spacing:1.2px;-webkit-text-stroke:0.6px #111;">N   020 902 2</div><div style="left:2013.00px;top:1171.64px;font:700 17.2px/17.2px 'Liberation Sans', sans-serif;color:#111;white-space:pre;">Kabelbinder</div><div style="left:2279.00px;top:1171.64px;font:700 17.2px/17.2px 'Liberation Sans', sans-serif;color:#111;white-space:pre;">3,6X246</div><div style="left:2790.80px;top:1171.64px;font:700 17.2px/17.2px 'Liberation Sans', sans-serif;color:#111;white-space:pre;">X</div><div style="left:1701.5px;top:1214px;width:1282.5px;height:2px;background:#d2d2d2"></div><div style="left:1726.00px;top:1219.84px;font:700 17.2px/17.2px 'Liberation Sans', sans-serif;color:#111;white-space:pre;">34</div><div style="left:1815.00px;top:1218.41px;font:400 18px/18px 'Liberation Mono', monospace;color:#111;white-space:pre;letter-spacing:1.2px;-webkit-text-stroke:0.6px #111;">N   102 582 01</div><div style="left:2013.00px;top:1219.84px;font:700 17.2px/17.2px 'Liberation Sans', sans-serif;color:#111;white-space:pre;">Schelle</div><div style="left:2279.00px;top:1219.84px;font:700 17.2px/17.2px 'Liberation Sans', sans-serif;color:#111;white-space:pre;">12-22X9X0,4</div><div style="left:2790.80px;top:1219.84px;font:700 17.2px/17.2px 'Liberation Sans', sans-serif;color:#111;white-space:pre;">2</div><div style="left:1701.5px;top:1262px;width:1282.5px;height:2px;background:#d2d2d2"></div><div style="left:1726.00px;top:1267.74px;font:700 17.2px/17.2px 'Liberation Sans', sans-serif;color:#111;white-space:pre;">35</div><div style="left:1815.00px;top:1266.31px;font:400 18px/18px 'Liberation Mono', monospace;color:#111;white-space:pre;letter-spacing:1.2px;-webkit-text-stroke:0.6px #111;">N   905 618 01</div><div style="left:2013.00px;top:1267.74px;font:700 17.2px/17.2px 'Liberation Sans', sans-serif;color:#111;white-space:pre;">Schelle</div><div style="left:2279.00px;top:1267.74px;font:700 17.2px/17.2px 'Liberation Sans', sans-serif;color:#111;white-space:pre;">16-28X9X0,5</div><div style="left:2790.80px;top:1267.74px;font:700 17.2px/17.2px 'Liberation Sans', sans-serif;color:#111;white-space:pre;">1</div><div style="left:1701.5px;top:1310px;width:1282.5px;height:2px;background:#d2d2d2"></div><div style="left:1726.00px;top:1315.74px;font:700 17.2px/17.2px 'Liberation Sans', sans-serif;color:#111;white-space:pre;">36</div><div style="left:1815.00px;top:1314.31px;font:400 18px/18px 'Liberation Mono', monospace;color:#111;white-space:pre;letter-spacing:1.2px;-webkit-text-stroke:0.6px #111;">N   102 582 01</div><div style="left:2013.00px;top:1315.74px;font:700 17.2px/17.2px 'Liberation Sans', sans-serif;color:#111;white-space:pre;">Schelle</div><div style="left:2279.00px;top:1315.74px;font:700 17.2px/17.2px 'Liberation Sans', sans-serif;color:#111;white-space:pre;">12-22X9X0,4</div><div style="left:2790.80px;top:1315.74px;font:700 17.2px/17.2px 'Liberation Sans', sans-serif;color:#111;white-space:pre;">X</div><div style="left:1701.5px;top:1357px;width:1282.5px;height:2px;background:#d2d2d2"></div><div style="left:1726.00px;top:1363.44px;font:700 17.2px/17.2px 'Liberation Sans', sans-serif;color:#111;white-space:pre;">37</div><div style="left:1815.00px;top:1362.01px;font:400 18px/18px 'Liberation Mono', monospace;color:#111;white-space:pre;letter-spacing:1.2px;-webkit-text-stroke:0.6px #111;">3D0 971 838 N</div><div style="left:2013.00px;top:1363.44px;font:700 17.2px/17.2px 'Liberation Sans', sans-serif;color:#111;white-space:pre;">Kabelbinder</div><div style="left:2279.00px;top:1363.44px;font:700 17.2px/17.2px 'Liberation Sans', sans-serif;color:#111;white-space:pre;">4,5X200</div><div style="left:2790.80px;top:1363.44px;font:700 17.2px/17.2px 'Liberation Sans', sans-serif;color:#111;white-space:pre;">1</div><div style="left:1701.5px;top:1405px;width:1282.5px;height:2px;background:#d2d2d2"></div><div style="left:2986px;top:101px;width:32.5px;height:1327.4px;background:#f0f0f0"></div><svg style="position:absolute;left:2994px;top:113px;" width="16" height="14" viewBox="0 0 16 14"><path d="M1.5 12L8 4.5L14.5 12" fill="none" stroke="#606060" stroke-width="3"/></svg><div style="left:2986px;top:705.6px;width:31.3px;height:688.2px;background:#c8c8c8"></div><svg style="position:absolute;left:2994px;top:1404px;" width="16" height="14" viewBox="0 0 16 14"><path d="M1.5 2L8 9.5L14.5 2" fill="none" stroke="#606060" stroke-width="3"/></svg><div style="left:4px;top:1449.7px;width:3014.7px;height:42.6px;background:#22538c"></div><div style="left:192.40px;top:1455.67px;font:400 12.2px/12.2px 'Liberation Sans', sans-serif;color:#f2f4f8;white-space:pre;">MARKT</div><div style="left:569.80px;top:1455.67px;font:400 12.2px/12.2px 'Liberation Sans', sans-serif;color:#f2f4f8;white-space:pre;">AUFTRAG</div><div style="left:995.00px;top:1455.67px;font:400 12.2px/12.2px 'Liberation Sans', sans-serif;color:#f2f4f8;white-space:pre;">MKB</div><div style="left:1172.60px;top:1455.67px;font:400 12.2px/12.2px 'Liberation Sans', sans-serif;color:#f2f4f8;white-space:pre;">GKB</div><div style="left:1333.20px;top:1455.67px;font:400 12.2px/12.2px 'Liberation Sans', sans-serif;color:#f2f4f8;white-space:pre;">AC</div><div style="left:1712.50px;top:1455.67px;font:400 12.2px/12.2px 'Liberation Sans', sans-serif;color:#f2f4f8;white-space:pre;">FAHRGESTELLNUMMER</div><div style="left:2186.60px;top:1455.67px;font:400 12.2px/12.2px 'Liberation Sans', sans-serif;color:#f2f4f8;white-space:pre;">PRODUKTION</div><div style="left:2499.30px;top:1455.67px;font:400 12.2px/12.2px 'Liberation Sans', sans-serif;color:#f2f4f8;white-space:pre;">VERKAUFSTYP</div><div style="left:2919.10px;top:1455.67px;font:400 12.2px/12.2px 'Liberation Sans', sans-serif;color:#f2f4f8;white-space:pre;">KAT</div><div style="left:2919.00px;top:1471.49px;font:700 17.5px/17.5px 'Liberation Sans', sans-serif;color:#fff;white-space:pre;">073</div><svg style="position:absolute;left:12px;top:1455px;" width="34" height="36" viewBox="0 0 34 36"><path d="M1.3 7.5V1.3H31.6V34.5" fill="none" stroke="#eef2f8" stroke-width="1.6"/><text x="0.8" y="22.2" font-family="Liberation Sans" font-weight="700" font-size="14.5" fill="#f4f6fa" textLength="24.5" lengthAdjust="spacingAndGlyphs">LEX</text><text x="0.6" y="34.6" font-family="Liberation Sans" font-weight="700" font-size="14.5" fill="#f4f6fa" textLength="31" lengthAdjust="spacingAndGlyphs">COM</text></svg><div style="left:2482.40px;top:1372.94px;font:400 19.8px/19.8px 'Liberation Sans', sans-serif;color:rgba(120,120,120,0.62);white-space:pre;">Windows aktivieren</div><div style="left:2482.40px;top:1398.23px;font:400 14.5px/14.5px 'Liberation Sans', sans-serif;color:rgba(120,120,120,0.62);white-space:pre;">Wechseln Sie zu den Einstellungen, um Windows zu aktivieren.</div><svg style="position:absolute;left:0;top:0" width="3024" height="1498" viewBox="0 0 3024 1498"><defs><pattern id="dots" width="17" height="15" patternUnits="userSpaceOnUse"><circle cx="3" cy="3" r="1.3" fill="#111"/><circle cx="12" cy="6" r="1.2" fill="#111"/><circle cx="6" cy="11.5" r="1.3" fill="#111"/></pattern></defs><text x="446.5" y="211.5" font-family="Liberation Sans" font-size="20" fill="#111" textLength="20.5" lengthAdjust="spacingAndGlyphs" stroke="#111" stroke-width="0.9">25</text><path d="M471.4 204.8L501.5 205.2" fill="none" stroke="#111" stroke-width="2.04" stroke-linecap="round" stroke-linejoin="round" /><path d="M504 214L504 201Q506 191 514 186L529 181.5Q537 181 538.5 189Q538 196 532 199L524 201.5Q521 205 521 214Q512 218 504 214Z" fill="#fff" stroke="none"/><path d="M504 214L504 201Q506 191 514 186L529 181.5Q537 181 538.5 189Q538 196 532 199L524 201.5Q521 205 521 214Q512 218 504 214Z" fill="url(#dots)" stroke="#111" stroke-width="2.04" stroke-linejoin="round"/><path d="M549 182.6L720.7 153.1Q738 152 761 157.2L831.8 184.4Q846 191 846.9 213.7" fill="none" stroke="#111" stroke-width="2.04" stroke-linecap="round" stroke-linejoin="round" /><path d="M553 189L720.7 159.7Q738 159 756 164.2L829.7 191.5Q840 197 840.8 213.7" fill="none" stroke="#111" stroke-width="2.04" stroke-linecap="round" stroke-linejoin="round" /><path d="M549 182.6Q545 186 553 189" fill="none" stroke="#111" stroke-width="2.04" stroke-linecap="round" stroke-linejoin="round" /><path d="M835 200Q837 205 836 213.7" fill="none" stroke="#111" stroke-width="1.44" stroke-linecap="round" stroke-linejoin="round" /><text x="736.4" y="210.1" font-family="Liberation Sans" font-size="20" fill="#111" textLength="21.2" lengthAdjust="spacingAndGlyphs" stroke="#111" stroke-width="0.9">33</text><path d="M706.6 205.6L731.8 205.6" fill="none" stroke="#111" stroke-width="2.04" stroke-linecap="round" stroke-linejoin="round" /><text x="883.2" y="210.1" font-family="Liberation Sans" font-size="20" fill="#111" textLength="10.1" lengthAdjust="spacingAndGlyphs" stroke="#111" stroke-width="0.9">6</text><path d="M850 205.6L881.2 205.6" fill="none" stroke="#111" stroke-width="2.04" stroke-linecap="round" stroke-linejoin="round" /><path d="M673.3 213.7Q667 200 669.3 195.5Q670 184 684.4 177.8Q692 176 700.6 187.4" fill="none" stroke="#111" stroke-width="2.04" stroke-linecap="round" stroke-linejoin="round" /><path d="M679.4 182.4Q674 192 676.3 196.5Q677 206 683.4 213.7" fill="none" stroke="#111" stroke-width="2.04" stroke-linecap="round" stroke-linejoin="round" /><path d="M690.5 190L696 184.4L704 186L705.6 193L700 197.5L692 196Z" fill="none" stroke="#111" stroke-width="2.04" stroke-linecap="round" stroke-linejoin="round" /><path d="M694.5 213L701.6 204.6" fill="none" stroke="#111" stroke-width="2.04" stroke-linecap="round" stroke-linejoin="round" /><ellipse cx="511" cy="266" rx="46" ry="18.5" transform="rotate(0 511 266)" fill="none" stroke="#111" stroke-width="2.04"/><ellipse cx="511" cy="266" rx="38" ry="15.7" transform="rotate(0 511 266)" fill="none" stroke="#111" stroke-width="2.04"/><path d="M506.5 250L506.5 227Q511 221 517 227L517.2 250" fill="none" stroke="#111" stroke-width="2.04" stroke-linecap="round" stroke-linejoin="round" /><path d="M497.7 252Q511 262 524 252" fill="none" stroke="#111" stroke-width="1.68" stroke-linecap="round" stroke-linejoin="round" /><path d="M496.5 249L479 270.4M520.3 247.8L541.6 269.2" fill="none" stroke="#111" stroke-width="1.8" stroke-linecap="round" stroke-linejoin="round" /><path d="M465 266Q468 290 486 297Q511 304 536 297Q554 290 557 266" fill="none" stroke="#111" stroke-width="2.04" stroke-linecap="round" stroke-linejoin="round" /><path d="M473 280L487.7 308.2Q511 314 532.8 308L553.5 282" fill="none" stroke="#111" stroke-width="2.04" stroke-linecap="round" stroke-linejoin="round" /><path d="M480 292Q511 302 545 292" fill="none" stroke="#111" stroke-width="1.68" stroke-linecap="round" stroke-linejoin="round" /><path d="M500.9 308L500.9 322Q497 327 501 334.5Q511 338 520.6 334.5Q524 327 520.6 322L520.6 308" fill="none" stroke="#111" stroke-width="2.04" stroke-linecap="round" stroke-linejoin="round" /><path d="M500 322Q511 326 521 322" fill="none" stroke="#111" stroke-width="1.56" stroke-linecap="round" stroke-linejoin="round" /><text x="442.5" y="313.9" font-family="Liberation Sans" font-size="20" fill="#111" textLength="18.5" lengthAdjust="spacingAndGlyphs" stroke="#111" stroke-width="0.9">19</text><path d="M463.3 307.8L487.7 307.8" fill="none" stroke="#111" stroke-width="2.04" stroke-linecap="round" stroke-linejoin="round" /><path d="M556.7 267.9L578 263Q586 262 586 274Q585 284 578 285L556.7 285.5" fill="none" stroke="#111" stroke-width="2.04" stroke-linecap="round" stroke-linejoin="round" /><path d="M576 263.5Q582 274 576 285" fill="none" stroke="#111" stroke-width="1.56" stroke-linecap="round" stroke-linejoin="round" /><ellipse cx="604.7" cy="272.3" rx="14.7" ry="15.7" transform="rotate(-10 604.7 272.3)" fill="none" stroke="#111" stroke-width="2.04"/><ellipse cx="606" cy="274" rx="10" ry="12" transform="rotate(-10 606 274)" fill="none" stroke="#111" stroke-width="1.56"/><path d="M595.5 257.9L597 248Q606 245 615.6 250L614 258" fill="none" stroke="#111" stroke-width="2.04" stroke-linecap="round" stroke-linejoin="round" /><path d="M603.4 291.3L603.4 306.3" fill="none" stroke="#111" stroke-width="2.04" stroke-linecap="round" stroke-linejoin="round" /><text x="595.9" y="325" font-family="Liberation Sans" font-size="20" fill="#111" textLength="19.7" lengthAdjust="spacingAndGlyphs" stroke="#111" stroke-width="0.9">36</text><path d="M644 251.6Q630 250 624 258Q620 266 624 276Q629 283 644 281.7" fill="none" stroke="#111" stroke-width="2.04" stroke-linecap="round" stroke-linejoin="round" /><ellipse cx="632" cy="266.5" rx="7.5" ry="13" transform="rotate(0 632 266.5)" fill="none" stroke="#111" stroke-width="1.68"/><ellipse cx="512" cy="349" rx="17" ry="7.5" transform="rotate(0 512 349)" fill="none" stroke="#111" stroke-width="2.04"/><path d="M495 349L495 357Q512 367 529 357L529 349" fill="none" stroke="#111" stroke-width="2.04" stroke-linecap="round" stroke-linejoin="round" /><path d="M495 353Q488 354 490 360Q496 364 503 361" fill="none" stroke="#111" stroke-width="1.8" stroke-linecap="round" stroke-linejoin="round" /><ellipse cx="504" cy="360" rx="3" ry="3.5" transform="rotate(0 504 360)" fill="none" stroke="#111" stroke-width="1.56"/><text x="444.5" y="360.9" font-family="Liberation Sans" font-size="20" fill="#111" textLength="20.6" lengthAdjust="spacingAndGlyphs" stroke="#111" stroke-width="0.9">35</text><path d="M468 354.3L490.5 354.3" fill="none" stroke="#111" stroke-width="2.04" stroke-linecap="round" stroke-linejoin="round" /><path d="M497.1 374L497.1 411Q511 419 525.3 411L525.3 374Q511 366 497.1 374Z" fill="#fff" stroke="none"/><path d="M497.1 374L497.1 411Q511 419 525.3 411L525.3 374Q511 366 497.1 374Z" fill="url(#dots)" stroke="#111" stroke-width="2.04" stroke-linejoin="round"/><ellipse cx="511.2" cy="374" rx="14.1" ry="4.3" transform="rotate(0 511.2 374)" fill="none" stroke="#111" stroke-width="2.04"/><text x="444" y="407.9" font-family="Liberation Sans" font-size="20" fill="#111" textLength="18.3" lengthAdjust="spacingAndGlyphs" stroke="#111" stroke-width="0.9">22</text><path d="M467 402.2L496.2 402.2" fill="none" stroke="#111" stroke-width="2.04" stroke-linecap="round" stroke-linejoin="round" /><ellipse cx="513" cy="427" rx="18.5" ry="7.5" transform="rotate(0 513 427)" fill="none" stroke="#111" stroke-width="2.04"/><path d="M494.5 427L494.5 436Q513 447 531.9 436L531.9 427" fill="none" stroke="#111" stroke-width="2.04" stroke-linecap="round" stroke-linejoin="round" /><ellipse cx="526" cy="437" rx="4" ry="4.5" transform="rotate(0 526 437)" fill="none" stroke="#111" stroke-width="1.68"/><text x="443.5" y="440.8" font-family="Liberation Sans" font-size="20" fill="#111" textLength="18.8" lengthAdjust="spacingAndGlyphs" stroke="#111" stroke-width="0.9">34</text><path d="M466 433.8L494.3 433.8" fill="none" stroke="#111" stroke-width="2.04" stroke-linecap="round" stroke-linejoin="round" /><path d="M504 449Q511 445 518 449L518 453Q511 457 504 453Z" fill="none" stroke="#111" stroke-width="1.8" stroke-linecap="round" stroke-linejoin="round" /><path d="M501 458L501 474Q511 479 521.6 474L521.6 458Q511 453 501 458Z" fill="none" stroke="#111" stroke-width="2.04" stroke-linecap="round" stroke-linejoin="round" /><path d="M498 474Q511 482 525.3 474" fill="none" stroke="#111" stroke-width="1.8" stroke-linecap="round" stroke-linejoin="round" /><ellipse cx="549.8" cy="463" rx="6.5" ry="3" transform="rotate(0 549.8 463)" fill="none" stroke="#111" stroke-width="2.04"/><path d="M543.2 472L543.2 489Q549.8 493 556.4 489L556.4 472Q549.8 468 543.2 472Z" fill="none" stroke="#111" stroke-width="2.04" stroke-linecap="round" stroke-linejoin="round" /><path d="M549.8 443.6L549.8 458.7" fill="none" stroke="#111" stroke-width="1.68" stroke-linecap="round" stroke-linejoin="round" /><ellipse cx="526.2" cy="481.8" rx="50" ry="16.4" transform="rotate(0 526.2 481.8)" fill="none" stroke="#111" stroke-width="2.04"/><path d="M480 490Q526 512 574 490" fill="none" stroke="#111" stroke-width="1.68" stroke-linecap="round" stroke-linejoin="round" /><path d="M475.5 486.9L475.5 582.8" fill="none" stroke="#111" stroke-width="2.04" stroke-linecap="round" stroke-linejoin="round" /><path d="M578.9 486.9L578.9 558.3" fill="none" stroke="#111" stroke-width="2.04" stroke-linecap="round" stroke-linejoin="round" /><path d="M475.5 500Q526 523 578.9 500" fill="none" stroke="#111" stroke-width="1.8" stroke-linecap="round" stroke-linejoin="round" /><path d="M542.2 439.9L542.2 400.4Q543 386 555.4 381.6L617.5 365.6Q636 362 644 372L644 430.5Q636 405 628.8 391Q624 381 619.4 382.5L568.6 392.8Q560 396 560.1 404.1L560.1 439.9Q551 443 542.2 439.9Z" fill="#fff" stroke="none"/><path d="M542.2 439.9L542.2 400.4Q543 386 555.4 381.6L617.5 365.6Q636 362 644 372L644 430.5Q636 405 628.8 391Q624 381 619.4 382.5L568.6 392.8Q560 396 560.1 404.1L560.1 439.9Q551 443 542.2 439.9Z" fill="url(#dots)" stroke="#111" stroke-width="2.04" stroke-linejoin="round"/><path d="M1061.3 214L1070 208Q1076 205 1079.3 214" fill="none" stroke="#111" stroke-width="1.92" stroke-linecap="round" stroke-linejoin="round" /><path d="M1204.8 214Q1210.4 207 1215.9 214" fill="none" stroke="#111" stroke-width="1.92" stroke-linecap="round" stroke-linejoin="round" /><path d="M637 429.6Q615 465 603 505Q598 545 576.1 571.5Q545 605 517.8 635.4Q480 672 467 684.3Q450 700 446 740Q437 790 438.8 851.7Q439 890 446.5 909.4Q452 935 462.9 952.1Q478 978 495.8 996.6Q508 1008 522.2 1016.3L561.6 1069L626.9 1138.9L659.5 1170.7" fill="none" stroke="#111" stroke-width="1.88" stroke-dasharray="26 6 2.5 6"/><path d="M639.1 528.2L455.7 714.4L644 765" fill="none" stroke="#111" stroke-width="1.88" stroke-dasharray="26 6 2.5 6"/><path d="M660 545.1L500.9 690L660 726.6" fill="none" stroke="#111" stroke-width="1.88" stroke-dasharray="26 6 2.5 6"/><path d="M644 717Q600 733 583.6 748.2Q565 770 562.9 795.2L562.9 808.4" fill="none" stroke="#111" stroke-width="1.88" stroke-dasharray="26 6 2.5 6"/><path d="M561.6 811.7C573 868 606 912 660 937.1" fill="none" stroke="#111" stroke-width="2.04" stroke-linecap="round" stroke-linejoin="round" /><path d="M566.8 810.2C579 862 612 903 660 926.5" fill="none" stroke="#111" stroke-width="2.04" stroke-linecap="round" stroke-linejoin="round" /><path d="M598.4 879.1L598.4 835.2Q600 818 611.7 813.3Q622 806 635.2 805.5L660 802.3" fill="none" stroke="#111" stroke-width="1.8" stroke-linecap="round" stroke-linejoin="round" /><path d="M608.6 893.2L608.6 841.5Q610 828 622.7 822.7Q640 816 660 814.9" fill="none" stroke="#111" stroke-width="1.8" stroke-linecap="round" stroke-linejoin="round" /><path d="M622.7 901.1L622.7 857.2Q625 840 635.2 835.2Q646 830 660 829" fill="none" stroke="#111" stroke-width="1.8" stroke-linecap="round" stroke-linejoin="round" /><path d="M629 901.1L629 866.6Q632 852 641.5 847.8Q650 845 660 844.6" fill="none" stroke="#111" stroke-width="1.8" stroke-linecap="round" stroke-linejoin="round" /><path d="M613 806Q618 798 628 799L636 800" fill="none" stroke="#111" stroke-width="1.68" stroke-linecap="round" stroke-linejoin="round" /><path d="M614.9 901.1L660 912M606 898L660 920" fill="none" stroke="#111" stroke-width="1.56" stroke-linecap="round" stroke-linejoin="round" /><path d="M603 850L603 880M616 860L616 895M636 870L636 900" fill="none" stroke="#111" stroke-width="1.32" stroke-linecap="round" stroke-linejoin="round" stroke-dasharray="1.5 4"/><path d="M493.4 892.1L493.4 909.4Q504.9 915.4 516.4 909.4L516.4 892.1Z" fill="#fff" stroke="#111" stroke-width="1.6"/><ellipse cx="504.9" cy="892.1" rx="11.5" ry="5.8" transform="rotate(0 504.9 892.1)" fill="#fff" stroke="#111" stroke-width="1.92"/><path d="M499.9 890.1Q497.9 895.1 508.9 894.1" fill="none" stroke="#111" stroke-width="1.44" stroke-linecap="round" stroke-linejoin="round" /><path d="M543.6 879.7L543.6 892.9Q555.1 898.9 566.6 892.9L566.6 879.7Z" fill="#fff" stroke="#111" stroke-width="1.6"/><ellipse cx="555.1" cy="879.7" rx="11.5" ry="5.8" transform="rotate(0 555.1 879.7)" fill="#fff" stroke="#111" stroke-width="1.92"/><path d="M550.1 877.7Q548.1 882.7 559.1 881.7" fill="none" stroke="#111" stroke-width="1.44" stroke-linecap="round" stroke-linejoin="round" /><path d="M560.0 899.5L560.0 920.9Q571.5 926.9 583.0 920.9L583.0 899.5Z" fill="#fff" stroke="#111" stroke-width="1.6"/><ellipse cx="571.5" cy="899.5" rx="11.5" ry="5.8" transform="rotate(0 571.5 899.5)" fill="#fff" stroke="#111" stroke-width="1.92"/><path d="M566.5 897.5Q564.5 902.5 575.5 901.5" fill="none" stroke="#111" stroke-width="1.44" stroke-linecap="round" stroke-linejoin="round" /><path d="M509.79999999999995 912.7L509.79999999999995 934Q521.3 940 532.8 934L532.8 912.7Z" fill="#fff" stroke="#111" stroke-width="1.6"/><ellipse cx="521.3" cy="912.7" rx="11.5" ry="5.8" transform="rotate(0 521.3 912.7)" fill="#fff" stroke="#111" stroke-width="1.92"/><path d="M516.3 910.7Q514.3 915.7 525.3 914.7" fill="none" stroke="#111" stroke-width="1.44" stroke-linecap="round" stroke-linejoin="round" /><path d="M524 886Q524 876 534 877Q546 880 556 893Q561 903 557 909L548.5 914.3L548.5 932.4Q558 936 569 932L569 920" fill="none" stroke="#111" stroke-width="1.8" stroke-linecap="round" stroke-linejoin="round" /><path d="M524 886Q526 898 537 905Q545 912 557 909" fill="none" stroke="#111" stroke-width="1.68" stroke-linecap="round" stroke-linejoin="round" /><path d="M548.5 914.3Q558 918 569 914" fill="none" stroke="#111" stroke-width="1.56" stroke-linecap="round" stroke-linejoin="round" /><path d="M479.4 912.7Q478 905 492 899" fill="none" stroke="#111" stroke-width="1.8" stroke-linecap="round" stroke-linejoin="round" /><path d="M480 930Q498 950 520 955Q560 958 592.9 929.1" fill="none" stroke="#111" stroke-width="1.8" stroke-linecap="round" stroke-linejoin="round" /><path d="M488 940Q515 950 560 945Q585 938 592 920" fill="none" stroke="#111" stroke-width="1.44" stroke-linecap="round" stroke-linejoin="round" stroke-dasharray="9 3"/><path d="M592.9 925Q598 940 592 952Q580 962 545 966L508 966" fill="none" stroke="#111" stroke-width="1.8" stroke-linecap="round" stroke-linejoin="round" /><path d="M479.4 912.7L479.4 948.9Q490 975 512.3 986.7L538.6 986.7" fill="none" stroke="#111" stroke-width="1.92" stroke-linecap="round" stroke-linejoin="round" /><path d="M468 926Q460 927 460 934Q461 941 468 941L479 940M468 926L479 924" fill="none" stroke="#111" stroke-width="1.8" stroke-linecap="round" stroke-linejoin="round" /><path d="M458 958.7L458 1004.8M458 958.7L477.7 948.9" fill="none" stroke="#111" stroke-width="1.92" stroke-linecap="round" stroke-linejoin="round" /><path d="M436.6 994.9L458 985.1M436.6 994.9L436.6 1008.1L518.9 1055.8Q530 1059 538.6 1057.5L578.1 1041L591.3 1032.8L591.3 1024" fill="none" stroke="#111" stroke-width="2.04" stroke-linecap="round" stroke-linejoin="round" /><path d="M440 1002L520 1048Q532 1051 540 1049L578 1033" fill="none" stroke="#111" stroke-width="1.68" stroke-linecap="round" stroke-linejoin="round" /><ellipse cx="448.1" cy="996.6" rx="6" ry="3" transform="rotate(0 448.1 996.6)" fill="none" stroke="#111" stroke-width="1.68"/><ellipse cx="527.1" cy="1042.7" rx="6.5" ry="3.2" transform="rotate(0 527.1 1042.7)" fill="none" stroke="#111" stroke-width="1.68"/><path d="M458 1004.8L512 1035M515 1000L515 1035M538 1000L538 1040M560 1005L560 1037" fill="none" stroke="#111" stroke-width="1.68" stroke-linecap="round" stroke-linejoin="round" /><path d="M546.8 991.6L632.4 981.8L632.4 1003.2L586.3 1019.6L548.5 1004.8Z" fill="none" stroke="#111" stroke-width="1.92" stroke-linecap="round" stroke-linejoin="round" /><path d="M586.3 1019.6L586.3 1030M600 1015L600 1025L570 1036L570 1025" fill="none" stroke="#111" stroke-width="1.68" stroke-linecap="round" stroke-linejoin="round" /><path d="M555.1 973.5L625.8 959Q633 962 630 970L562 985Q553 983 555.1 973.5Z" fill="none" stroke="#111" stroke-width="1.8" stroke-linecap="round" stroke-linejoin="round" /><ellipse cx="559" cy="979" rx="4" ry="6.5" transform="rotate(0 559 979)" fill="none" stroke="#111" stroke-width="1.68"/><path d="M560 965Q570 955 590 958L612 955" fill="none" stroke="#111" stroke-width="1.56" stroke-linecap="round" stroke-linejoin="round" /><ellipse cx="527.9" cy="985.1" rx="10.5" ry="10" transform="rotate(0 527.9 985.1)" fill="none" stroke="#111" stroke-width="1.92"/><ellipse cx="527.9" cy="985.1" rx="6" ry="5.5" transform="rotate(0 527.9 985.1)" fill="none" stroke="#111" stroke-width="1.56"/><path d="M516 975Q520 962 535 962Q542 964 545 972" fill="none" stroke="#111" stroke-width="1.68" stroke-linecap="round" stroke-linejoin="round" /><path d="M598 995L644 985M620 960L644 950" fill="none" stroke="#111" stroke-width="1.56" stroke-linecap="round" stroke-linejoin="round" /><path d="M652.9 1174L697.4 1213.5Q710 1228 718.8 1234.9Q735 1250 751.7 1254.6Q770 1262 784.6 1261.2Q795 1258 801.1 1253Q812 1246 826 1251L834 1256.3" fill="none" stroke="#111" stroke-width="2.04" stroke-linecap="round" stroke-linejoin="round" /><path d="M649 1180L693 1219Q706 1233 714 1240Q731 1255 749 1260Q768 1268 785 1267Q797 1264 803 1259Q813 1252 824 1256L831 1261" fill="none" stroke="#111" stroke-width="2.04" stroke-linecap="round" stroke-linejoin="round" /><path d="M834 1256.3Q837 1259 831 1261" fill="none" stroke="#111" stroke-width="1.68" stroke-linecap="round" stroke-linejoin="round" /><text x="692.4" y="1183.8" font-family="Liberation Sans" font-size="20" fill="#111" textLength="9.1" lengthAdjust="spacingAndGlyphs" stroke="#111" stroke-width="0.9">6</text><path d="M696.5 1188.8L696.5 1208.5" fill="none" stroke="#111" stroke-width="2.04" stroke-linecap="round" stroke-linejoin="round" /><path d="M695.7 1127.9Q740 1140 768.1 1144.3Q800 1147 817.5 1146Q840 1148 850.5 1155.8Q867 1165 866.9 1175.6Q866 1185 863.6 1192.1Q850 1204 825.8 1215.1" fill="none" stroke="#111" stroke-width="2.04" stroke-linecap="round" stroke-linejoin="round" /><path d="M691 1132Q735 1146 767 1150Q798 1153 816 1152Q836 1154 846 1160Q860 1170 860 1178Q859 1186 856 1190Q845 1200 823 1211" fill="none" stroke="#111" stroke-width="2.04" stroke-linecap="round" stroke-linejoin="round" /><path d="M825.8 1215.1Q820 1214 823 1211" fill="none" stroke="#111" stroke-width="1.68" stroke-linecap="round" stroke-linejoin="round" /><path d="M894.9 1136.1L712.2 1220" fill="none" stroke="#111" stroke-width="1.88" stroke-dasharray="26 6 2.5 6"/><path d="M735.2 1208.5L751.7 1216.7" fill="none" stroke="#111" stroke-width="1.8" stroke-linecap="round" stroke-linejoin="round" /><path d="M756.6 1120.5L814.2 1096.6" fill="none" stroke="#111" stroke-width="1.8" stroke-linecap="round" stroke-linejoin="round" /><path d="M756 1214Q752 1222 756 1230Q770 1240 788 1242Q796 1240 800 1232L815 1226Q820 1220 816 1213Q812 1208 806 1210L790 1218Q772 1212 764 1210Q758 1209 756 1214Z" fill="#fff" stroke="none"/><path d="M756 1214Q752 1222 756 1230Q770 1240 788 1242Q796 1240 800 1232L815 1226Q820 1220 816 1213Q812 1208 806 1210L790 1218Q772 1212 764 1210Q758 1209 756 1214Z" fill="url(#dots)" stroke="#111" stroke-width="2.04" stroke-linejoin="round"/><ellipse cx="792" cy="1230" rx="6" ry="10" transform="rotate(20 792 1230)" fill="none" stroke="#111" stroke-width="1.68"/><text x="837.3" y="1234.9" font-family="Liberation Sans" font-size="20" fill="#111" textLength="17.3" lengthAdjust="spacingAndGlyphs" stroke="#111" stroke-width="0.9">10</text><path d="M812.6 1231.6L834.8 1231.6" fill="none" stroke="#111" stroke-width="2.04" stroke-linecap="round" stroke-linejoin="round" /><path d="M685.8 1232.4L659.5 1243.9L685.8 1256.3" fill="none" stroke="#111" stroke-width="1.88" stroke-dasharray="26 6 2.5 6"/><path d="M690 1255Q686 1262 690.1 1268.8L739 1291.3Q748 1290 750 1280Q748 1272 746.6 1273.8L695 1250Q691 1250 690 1255Z" fill="#fff" stroke="none"/><path d="M690 1255Q686 1262 690.1 1268.8L739 1291.3Q748 1290 750 1280Q748 1272 746.6 1273.8L695 1250Q691 1250 690 1255Z" fill="url(#dots)" stroke="#111" stroke-width="2.04" stroke-linejoin="round"/><ellipse cx="742.2" cy="1282.6" rx="7" ry="10" transform="rotate(15 742.2 1282.6)" fill="none" stroke="#111" stroke-width="1.68"/><path d="M759.1 1282.6L835.6 1317.7M756.6 1293.8L833.1 1330.2M759.1 1282.6Q752 1286 756.6 1293.8" fill="none" stroke="#111" stroke-width="2.04" stroke-linecap="round" stroke-linejoin="round" /><path d="M805.5 1304L826 1293Q830 1296 828 1300L811 1311" fill="none" stroke="#111" stroke-width="1.68" stroke-linecap="round" stroke-linejoin="round" /><path d="M836 1312L846 1305L855.6 1300L848 1312L838 1316" fill="none" stroke="#111" stroke-width="1.68" stroke-linecap="round" stroke-linejoin="round" /><ellipse cx="842" cy="1331.0" rx="7" ry="16" transform="rotate(-20 842 1331.0)" fill="none" stroke="#111" stroke-width="1.8"/><ellipse cx="849" cy="1333.5" rx="7" ry="16" transform="rotate(-20 849 1333.5)" fill="none" stroke="#111" stroke-width="1.8"/><ellipse cx="856" cy="1336.0" rx="7" ry="16" transform="rotate(-20 856 1336.0)" fill="none" stroke="#111" stroke-width="1.8"/><ellipse cx="863" cy="1338.5" rx="7" ry="16" transform="rotate(-20 863 1338.5)" fill="none" stroke="#111" stroke-width="1.8"/><path d="M865.6 1335.2L900 1345.2M870.7 1347.8L900 1361.5" fill="none" stroke="#111" stroke-width="1.92" stroke-linecap="round" stroke-linejoin="round" /><path d="M872 1362L890 1353Q896 1356 894 1361L877 1370Q870 1368 872 1362Z" fill="none" stroke="#111" stroke-width="1.8" stroke-linecap="round" stroke-linejoin="round" /><path d="M836 1262Q832 1270 836 1275Q846 1278 850 1285L837 1292Q832 1297 840 1298L862 1288Q870 1280 868 1268Q862 1258 848 1257Q840 1257 836 1262Z" fill="#fff" stroke="none"/><path d="M836 1262Q832 1270 836 1275Q846 1278 850 1285L837 1292Q832 1297 840 1298L862 1288Q870 1280 868 1268Q862 1258 848 1257Q840 1257 836 1262Z" fill="url(#dots)" stroke="#111" stroke-width="2.04" stroke-linejoin="round"/><ellipse cx="838" cy="1292" rx="5" ry="7" transform="rotate(20 838 1292)" fill="none" stroke="#111" stroke-width="1.56"/><text x="885" y="1265.3" font-family="Liberation Sans" font-size="20" fill="#111" textLength="17.5" lengthAdjust="spacingAndGlyphs" stroke="#111" stroke-width="0.9">25</text><path d="M858.7 1257.9L883.4 1257.9" fill="none" stroke="#111" stroke-width="2.04" stroke-linecap="round" stroke-linejoin="round" /><path d="M824.1 1100Q822 1109 830 1113Q845 1114 860 1108Q864 1100 861 1096L826 1096Z" fill="#fff" stroke="none"/><path d="M824.1 1100Q822 1109 830 1113Q845 1114 860 1108Q864 1100 861 1096L826 1096Z" fill="url(#dots)" stroke="#111" stroke-width="2.04" stroke-linejoin="round"/><text x="844.7" y="1138.6" font-family="Liberation Sans" font-size="20" fill="#111" textLength="9.9" lengthAdjust="spacingAndGlyphs" stroke="#111" stroke-width="0.9">8</text><path d="M851.3 1109.8L851.3 1120.5" fill="none" stroke="#111" stroke-width="1.68" stroke-linecap="round" stroke-linejoin="round" /><text x="874.3" y="1125.4" font-family="Liberation Sans" font-size="20" fill="#111" textLength="19.8" lengthAdjust="spacingAndGlyphs" stroke="#111" stroke-width="0.9">35</text><path d="M885 1098L885 1108" fill="none" stroke="#111" stroke-width="1.68" stroke-linecap="round" stroke-linejoin="round" /><path d="M978.7 1096L904.7 1131.1L919.5 1137.7" fill="none" stroke="#111" stroke-width="1.88" stroke-dasharray="26 6 2.5 6"/><path d="M880 1142.7L894.8 1135.3" fill="none" stroke="#111" stroke-width="1.8" stroke-linecap="round" stroke-linejoin="round" /><path d="M919.5 1137.7Q918 1128 931 1127.9L978.7 1142.7Q1000 1160 1031.4 1195.3L1070.9 1211L1151.6 1234.8Q1175 1244 1174.6 1259.5Q1172 1275 1166.4 1280.9L1140 1299Q1128 1301 1123 1290Q1120 1278 1130 1272L1146.6 1253L1136.7 1261.2L1056.1 1238.1L1016.6 1225Q990 1190 962.3 1173.9L921.1 1155.8Q917 1148 919.5 1137.7Z" fill="#fff" stroke="none"/><path d="M919.5 1137.7Q918 1128 931 1127.9L978.7 1142.7Q1000 1160 1031.4 1195.3L1070.9 1211L1151.6 1234.8Q1175 1244 1174.6 1259.5Q1172 1275 1166.4 1280.9L1140 1299Q1128 1301 1123 1290Q1120 1278 1130 1272L1146.6 1253L1136.7 1261.2L1056.1 1238.1L1016.6 1225Q990 1190 962.3 1173.9L921.1 1155.8Q917 1148 919.5 1137.7Z" fill="url(#dots)" stroke="#111" stroke-width="2.04" stroke-linejoin="round"/><ellipse cx="1131" cy="1286.5" rx="9" ry="13" transform="rotate(-25 1131 1286.5)" fill="none" stroke="#111" stroke-width="1.92"/><ellipse cx="1132" cy="1287" rx="5" ry="8" transform="rotate(-25 1132 1287)" fill="none" stroke="#111" stroke-width="1.56"/><text x="1208.3" y="1267.7" font-family="Liberation Sans" font-size="20" fill="#111" textLength="19" lengthAdjust="spacingAndGlyphs" stroke="#111" stroke-width="0.9">23</text><path d="M1177.9 1261.2L1205.9 1261.2" fill="none" stroke="#111" stroke-width="2.04" stroke-linecap="round" stroke-linejoin="round" /><path d="M1036.4 1182.2Q1030 1200 1028.1 1213.4Q1020 1228 1011.7 1241.4Q995 1265 972.2 1287.5Q960 1300 961.8 1285.1Q963 1270 960.4 1272.4Q955 1258 944.9 1260.5Q925 1265 915.3 1273.9Q900 1290 901.2 1310.5Q905 1330 915.3 1335.9Q925 1345 936.4 1343Q955 1342 967.4 1335.9Q980 1330 987.2 1321.8Q1000 1305 1003.4 1299L1044.6 1248Q1055 1232 1061 1221.7Q1066 1200 1069.3 1187.1Z" fill="#fff" stroke="none"/><path d="M1036.4 1182.2Q1030 1200 1028.1 1213.4Q1020 1228 1011.7 1241.4Q995 1265 972.2 1287.5Q960 1300 961.8 1285.1Q963 1270 960.4 1272.4Q955 1258 944.9 1260.5Q925 1265 915.3 1273.9Q900 1290 901.2 1310.5Q905 1330 915.3 1335.9Q925 1345 936.4 1343Q955 1342 967.4 1335.9Q980 1330 987.2 1321.8Q1000 1305 1003.4 1299L1044.6 1248Q1055 1232 1061 1221.7Q1066 1200 1069.3 1187.1Z" fill="url(#dots)" stroke="#111" stroke-width="2.04" stroke-linejoin="round"/><ellipse cx="1052.8" cy="1183" rx="16.5" ry="8.5" transform="rotate(-8 1052.8 1183)" fill="none" stroke="#111" stroke-width="2.04"/><ellipse cx="1052.8" cy="1184" rx="10" ry="5" transform="rotate(-8 1052.8 1184)" fill="none" stroke="#111" stroke-width="1.56"/><path d="M961.8 1285.1Q950 1296 934 1305Q928 1316 934 1318Q946 1315 963.2 1296.4Z" fill="#fff" stroke="#111" stroke-width="1.5"/><text x="934.3" y="1234.8" font-family="Liberation Sans" font-size="20" fill="#111" textLength="9.9" lengthAdjust="spacingAndGlyphs" stroke="#111" stroke-width="0.9">9</text><path d="M937.6 1238.1L937.6 1259.5" fill="none" stroke="#111" stroke-width="2.04" stroke-linecap="round" stroke-linejoin="round" /><ellipse cx="1061" cy="1155.8" rx="17.5" ry="9.5" transform="rotate(-5 1061 1155.8)" fill="none" stroke="#111" stroke-width="2.04"/><path d="M1043.5 1156L1045 1163Q1061 1172 1078 1163L1078.5 1156" fill="none" stroke="#111" stroke-width="1.92" stroke-linecap="round" stroke-linejoin="round" /><path d="M1038 1147.6Q1033 1152 1040 1156L1046 1150Q1045 1144 1052 1143" fill="none" stroke="#111" stroke-width="1.68" stroke-linecap="round" stroke-linejoin="round" /><path d="M1066 1136L1061 1162" fill="none" stroke="#111" stroke-width="1.56" stroke-linecap="round" stroke-linejoin="round" /><text x="1107" y="1165.6" font-family="Liberation Sans" font-size="20" fill="#111" textLength="20" lengthAdjust="spacingAndGlyphs" stroke="#111" stroke-width="0.9">34</text><path d="M1083.3 1156.7L1103.8 1156.7" fill="none" stroke="#111" stroke-width="2.04" stroke-linecap="round" stroke-linejoin="round" /><path d="M1069 1096L1064.8 1119.9Q1061 1122 1062.2 1126L1063 1133.6Q1069 1138 1075.9 1135.3Q1081 1130 1081 1125.9L1082.7 1109.6L1086.1 1096" fill="none" stroke="#111" stroke-width="2.04" stroke-linecap="round" stroke-linejoin="round" /><path d="M1063 1123Q1072 1127 1081.8 1121.6" fill="none" stroke="#111" stroke-width="1.68" stroke-linecap="round" stroke-linejoin="round" /><path d="M1086.1 1109.6L1104.9 1129.3Q1112 1133 1115.2 1125.9L1099.8 1107.1" fill="none" stroke="#111" stroke-width="1.8" stroke-linecap="round" stroke-linejoin="round" /><path d="M1115 1096Q1112 1108 1120 1110Q1128 1108 1128.8 1096" fill="none" stroke="#111" stroke-width="1.8" stroke-linecap="round" stroke-linejoin="round" /><path d="M1192.9 1096L1192.9 1122Q1190 1126 1193 1130Q1202 1135 1210.8 1130Q1213 1126 1210.8 1122L1210.8 1096" fill="none" stroke="#111" stroke-width="1.92" stroke-linecap="round" stroke-linejoin="round" /><path d="M1193 1122Q1202 1126 1210.8 1122" fill="none" stroke="#111" stroke-width="1.56" stroke-linecap="round" stroke-linejoin="round" /><path d="M1220 1096Q1222 1101 1230 1100" fill="none" stroke="#111" stroke-width="1.56" stroke-linecap="round" stroke-linejoin="round" /><circle cx="1245" cy="1282" r="1.4" fill="#111"/><path d="M967.4 1265.4L967.4 1347.2" fill="none" stroke="#111" stroke-width="1.8" stroke-linecap="round" stroke-linejoin="round" /><path d="M957 1270L967.4 1265.4" fill="none" stroke="#111" stroke-width="1.8" stroke-linecap="round" stroke-linejoin="round" /><text x="940.6" y="1364.1" font-family="Liberation Sans" font-size="20" fill="#111" textLength="21.2" lengthAdjust="spacingAndGlyphs" stroke="#111" stroke-width="0.9">35</text><path d="M963.9 1353.5L985.1 1353.5" fill="none" stroke="#111" stroke-width="2.04" stroke-linecap="round" stroke-linejoin="round" /><ellipse cx="999.9" cy="1355.7" rx="13" ry="16" transform="rotate(-15 999.9 1355.7)" fill="none" stroke="#111" stroke-width="2.04"/><ellipse cx="1005" cy="1344" rx="5" ry="4.5" transform="rotate(0 1005 1344)" fill="none" stroke="#111" stroke-width="1.56"/><path d="M990 1340Q988 1334 996 1333Q1004 1334 1006 1337" fill="none" stroke="#111" stroke-width="1.68" stroke-linecap="round" stroke-linejoin="round" /><path d="M967.4 1372L967.4 1378L990 1366" fill="none" stroke="#111" stroke-width="1.8" stroke-linecap="round" stroke-linejoin="round" stroke-dasharray="6 3 2 3"/><path d="M1022.5 1330.3Q1026 1318 1035.1 1314.8Q1042 1310 1049.3 1309.8Q1056 1309 1063.4 1313.3Q1073 1318 1077.5 1327.4Q1083 1336 1081.7 1347.2Q1080 1354 1074.6 1359.9" fill="none" stroke="#111" stroke-width="2.04" stroke-linecap="round" stroke-linejoin="round" /><path d="M1049.3 1313.3Q1060 1316 1069 1324.6Q1076 1334 1077.5 1347.2Q1078 1353 1076 1359.9" fill="none" stroke="#111" stroke-width="1.8" stroke-linecap="round" stroke-linejoin="round" /><path d="M1074.6 1362.7L1074.6 1392.3L1046.4 1408.5L1015.4 1390.9" fill="none" stroke="#111" stroke-width="2.04" stroke-linecap="round" stroke-linejoin="round" /><path d="M1026.7 1385.3L1049.3 1372.6L1069 1389.5L1046.4 1400L1026.7 1385.3Z" fill="none" stroke="#111" stroke-width="1.68" stroke-linecap="round" stroke-linejoin="round" /><ellipse cx="1046.4" cy="1389.8" rx="5.5" ry="3" transform="rotate(0 1046.4 1389.8)" fill="none" stroke="#111" stroke-width="1.56"/><path d="M1046.4 1344.4Q1054 1348 1054.9 1355.7L1054.9 1366.9" fill="none" stroke="#111" stroke-width="1.92" stroke-linecap="round" stroke-linejoin="round" /><path d="M1054.9 1369.8L999.9 1392.3" fill="none" stroke="#111" stroke-width="1.92" stroke-linecap="round" stroke-linejoin="round" /><path d="M1040 1322Q1048 1323 1050 1330" fill="none" stroke="#111" stroke-width="1.68" stroke-linecap="round" stroke-linejoin="round" /><path d="M1021 1337.3L1045 1330.3M1026 1350L1046 1343" fill="none" stroke="#111" stroke-width="1.8" stroke-linecap="round" stroke-linejoin="round" /><ellipse cx="1023.9" cy="1344.4" rx="5" ry="8" transform="rotate(10 1023.9 1344.4)" fill="none" stroke="#111" stroke-width="1.8"/><ellipse cx="1025" cy="1344.4" rx="2.5" ry="4" transform="rotate(10 1025 1344.4)" fill="none" stroke="#111" stroke-width="1.44"/><ellipse cx="975" cy="1396" rx="5" ry="9" transform="rotate(25 975 1396)" fill="none" stroke="#111" stroke-width="1.8"/><ellipse cx="982" cy="1393" rx="5" ry="9" transform="rotate(25 982 1393)" fill="none" stroke="#111" stroke-width="1.8"/><ellipse cx="989" cy="1390" rx="5" ry="9" transform="rotate(25 989 1390)" fill="none" stroke="#111" stroke-width="1.8"/><path d="M966 1395L972 1404.6Q978 1406 984 1403" fill="none" stroke="#111" stroke-width="1.8" stroke-linecap="round" stroke-linejoin="round" /><path d="M1066.2 1313.3L1087.3 1309.1" fill="none" stroke="#111" stroke-width="1.68" stroke-linecap="round" stroke-linejoin="round" /><ellipse cx="1072.0" cy="1313" rx="3.5" ry="6" transform="rotate(20 1072.0 1313)" fill="none" stroke="#111" stroke-width="1.56"/><ellipse cx="1077.5" cy="1312" rx="3.5" ry="6" transform="rotate(20 1077.5 1312)" fill="none" stroke="#111" stroke-width="1.56"/><ellipse cx="1083.0" cy="1311" rx="3.5" ry="6" transform="rotate(20 1083.0 1311)" fill="none" stroke="#111" stroke-width="1.56"/><ellipse cx="1105.7" cy="1299.2" rx="13" ry="17" transform="rotate(-15 1105.7 1299.2)" fill="none" stroke="#111" stroke-width="2.04"/><ellipse cx="1109" cy="1286" rx="5" ry="4.5" transform="rotate(0 1109 1286)" fill="none" stroke="#111" stroke-width="1.56"/><path d="M1096 1280Q1095 1274 1103 1274Q1110 1276 1112 1280" fill="none" stroke="#111" stroke-width="1.68" stroke-linecap="round" stroke-linejoin="round" /><path d="M1115.5 1316.2L1115.5 1337.3" fill="none" stroke="#111" stroke-width="2.04" stroke-linecap="round" stroke-linejoin="round" /><text x="1107.1" y="1355" font-family="Liberation Sans" font-size="20" fill="#111" textLength="19.7" lengthAdjust="spacingAndGlyphs" stroke="#111" stroke-width="0.9">35</text><path d="M1120 1295L1135 1288" fill="none" stroke="#111" stroke-width="1.56" stroke-linecap="round" stroke-linejoin="round" /></svg><div style="left:644px;top:213.5px;width:1736.5px;height:883.0999999999999px;background:#fff;border:1px solid #7a7a7a;box-sizing:border-box;box-shadow:0 6px 18px rgba(0,0,0,0.28)"></div><div style="left:647.60px;top:226.98px;font:400 24.6px/24.6px 'Liberation Sans', sans-serif;color:#000;white-space:pre;">Historiendaten</div><div style="left:2236.30px;top:227.33px;font:400 23px/23px 'Liberation Sans', sans-serif;color:#111;white-space:pre;">?</div><svg style="position:absolute;left:2322px;top:226px;" width="22" height="22" viewBox="0 0 22 22"><path d="M1 1L21 21M21 1L1 21" stroke="#111" stroke-width="1.6"/></svg><div style="left:665px;top:279.5px;width:1699.5px;height:31.2px;border:2px solid #151515;background:#e8e8e8;box-sizing:border-box"></div><div style="left:673.00px;top:287.41px;font:700 17px/17px 'Liberation Sans', sans-serif;color:#0a0a0a;white-space:pre;">POS</div><div style="left:752.30px;top:287.41px;font:700 17px/17px 'Liberation Sans', sans-serif;color:#0a0a0a;white-space:pre;">TEILENUMMER</div><div style="left:938.60px;top:287.41px;font:700 17px/17px 'Liberation Sans', sans-serif;color:#0a0a0a;white-space:pre;">BENENNUNG</div><div style="left:1921.40px;top:287.41px;font:700 17px/17px 'Liberation Sans', sans-serif;color:#0a0a0a;white-space:pre;">BEMERKUNG</div><div style="left:2121.20px;top:287.41px;font:700 17px/17px 'Liberation Sans', sans-serif;color:#0a0a0a;white-space:pre;">MODELLANGABE</div><div style="left:2294.80px;top:287.41px;font:700 17px/17px 'Liberation Sans', sans-serif;color:#0a0a0a;white-space:pre;">MENGE</div><div style="left:665px;top:312px;width:1699.5px;height:2.4px;background:#d6d6d6"></div><div style="left:665px;top:314.4px;width:1699.5px;height:51.6px;background:#f1f1f1"></div><div style="left:938.60px;top:317.40px;font:700 17.6px/17.6px 'Liberation Sans', sans-serif;color:#111;white-space:pre;">Unterdruckanlage</div><div style="left:938.60px;top:344.10px;font:700 17.6px/17.6px 'Liberation Sans', sans-serif;color:#111;white-space:pre;">Aktivkohlefilteranlage</div><div style="left:1921.40px;top:317.40px;font:700 17.6px/17.6px 'Liberation Sans', sans-serif;color:#111;white-space:pre;">1,8Ltr.</div><div style="left:2121.20px;top:317.40px;font:700 17.6px/17.6px 'Liberation Sans', sans-serif;color:#111;white-space:pre;">4-Zylinder+</div><div style="left:2121.20px;top:344.10px;font:700 17.6px/17.6px 'Liberation Sans', sans-serif;color:#111;white-space:pre;">PH</div><div style="left:665px;top:365px;width:1699.5px;height:2px;background:#cfcfcf"></div><div style="left:677.50px;top:371.10px;font:700 17.6px/17.6px 'Liberation Sans', sans-serif;color:#111;white-space:pre;">-</div><div style="left:752.00px;top:370.01px;font:400 18px/18px 'Liberation Mono', monospace;color:#111;white-space:pre;letter-spacing:1.2px;-webkit-text-stroke:0.6px #111;">N   020 353 5</div><div style="left:938.80px;top:371.10px;font:700 17.6px/17.6px 'Liberation Sans', sans-serif;color:#111;white-space:pre;">Schlauch</div><div style="left:938.80px;top:397.77px;font:700 17.6px/17.6px 'Liberation Sans', sans-serif;color:#111;white-space:pre;">(Meterware)</div><div style="left:1921.40px;top:371.10px;font:700 17.6px/17.6px 'Liberation Sans', sans-serif;color:#111;white-space:pre;">3,5X2</div><div style="left:1957.00px;width:400px;text-align:right;top:371.30px;font:700 15px/15px 'Liberation Sans', sans-serif;color:#111;white-space:pre;">*</div><div style="left:665px;top:418px;width:1699.5px;height:2px;background:#cfcfcf"></div><div style="left:674.50px;top:424.40px;font:700 17.6px/17.6px 'Liberation Sans', sans-serif;color:#111;white-space:pre;">8</div><div style="left:752.00px;top:423.31px;font:400 18px/18px 'Liberation Mono', monospace;color:#111;white-space:pre;letter-spacing:1.2px;-webkit-text-stroke:0.6px #111;">030 133 335 A</div><div style="left:938.80px;top:424.40px;font:700 17.6px/17.6px 'Liberation Sans', sans-serif;color:#111;white-space:pre;">Kappe</div><div style="left:938.80px;top:451.07px;font:700 17.6px/17.6px 'Liberation Sans', sans-serif;color:#111;white-space:pre;">für Fahrzeuge mit Hydraulik-</div><div style="left:938.80px;top:477.74px;font:700 17.6px/17.6px 'Liberation Sans', sans-serif;color:#111;white-space:pre;">pumpe</div><div style="left:1921.40px;top:424.40px;font:700 17.6px/17.6px 'Liberation Sans', sans-serif;color:#111;white-space:pre;">12MM</div><div style="left:1957.00px;width:400px;text-align:right;top:424.40px;font:700 17.6px/17.6px 'Liberation Sans', sans-serif;color:#111;white-space:pre;">1</div><div style="left:665px;top:498px;width:1699.5px;height:2px;background:#cfcfcf"></div><div style="left:674.50px;top:504.30px;font:700 17.6px/17.6px 'Liberation Sans', sans-serif;color:#111;white-space:pre;">8</div><div style="left:752.00px;top:503.21px;font:400 18px/18px 'Liberation Mono', monospace;color:#111;white-space:pre;letter-spacing:1.2px;-webkit-text-stroke:0.6px #111;">049 133 335 A</div><div style="left:938.80px;top:504.30px;font:700 17.6px/17.6px 'Liberation Sans', sans-serif;color:#111;white-space:pre;">Kappe</div><div style="left:938.80px;top:530.97px;font:700 17.6px/17.6px 'Liberation Sans', sans-serif;color:#111;white-space:pre;">für Fahrzeuge mit Hydraulik-</div><div style="left:938.80px;top:557.64px;font:700 17.6px/17.6px 'Liberation Sans', sans-serif;color:#111;white-space:pre;">pumpe</div><div style="left:1921.40px;top:504.30px;font:700 17.6px/17.6px 'Liberation Sans', sans-serif;color:#111;white-space:pre;">12</div><div style="left:1957.00px;width:400px;text-align:right;top:504.30px;font:700 17.6px/17.6px 'Liberation Sans', sans-serif;color:#111;white-space:pre;">1</div><div style="left:665px;top:578px;width:1699.5px;height:2px;background:#cfcfcf"></div><div style="left:674.50px;top:584.40px;font:700 17.6px/17.6px 'Liberation Sans', sans-serif;color:#111;white-space:pre;">11</div><div style="left:752.00px;top:583.31px;font:400 18px/18px 'Liberation Mono', monospace;color:#111;white-space:pre;letter-spacing:1.2px;-webkit-text-stroke:0.6px #111;">026 133 382 H</div><div style="left:938.80px;top:584.40px;font:700 17.6px/17.6px 'Liberation Sans', sans-serif;color:#111;white-space:pre;">Anschlussrohr</div><div style="left:938.80px;top:611.07px;font:700 17.6px/17.6px 'Liberation Sans', sans-serif;color:#111;white-space:pre;">für Fahrzeuge mit Hydraulik-</div><div style="left:938.80px;top:637.74px;font:700 17.6px/17.6px 'Liberation Sans', sans-serif;color:#111;white-space:pre;">pumpe</div><div style="left:1957.00px;width:400px;text-align:right;top:584.40px;font:700 17.6px/17.6px 'Liberation Sans', sans-serif;color:#111;white-space:pre;">1</div><div style="left:665px;top:658px;width:1699.5px;height:2px;background:#cfcfcf"></div><div style="left:674.50px;top:664.30px;font:700 17.6px/17.6px 'Liberation Sans', sans-serif;color:#111;white-space:pre;">14</div><div style="left:752.00px;top:663.21px;font:400 18px/18px 'Liberation Mono', monospace;color:#111;white-space:pre;letter-spacing:1.2px;-webkit-text-stroke:0.6px #111;">035 133 382 D</div><div style="left:938.80px;top:664.30px;font:700 17.6px/17.6px 'Liberation Sans', sans-serif;color:#111;white-space:pre;">Stutzen</div><div style="left:1957.00px;width:400px;text-align:right;top:664.30px;font:700 17.6px/17.6px 'Liberation Sans', sans-serif;color:#111;white-space:pre;">1</div><div style="left:665px;top:685px;width:1699.5px;height:2px;background:#cfcfcf"></div><div style="left:674.50px;top:690.90px;font:700 17.6px/17.6px 'Liberation Sans', sans-serif;color:#111;white-space:pre;">20</div><div style="left:752.00px;top:689.81px;font:400 18px/18px 'Liberation Mono', monospace;color:#111;white-space:pre;letter-spacing:1.2px;-webkit-text-stroke:0.6px #111;">026 133 521</div><div style="left:938.80px;top:690.90px;font:700 17.6px/17.6px 'Liberation Sans', sans-serif;color:#111;white-space:pre;">Schlauch</div><div style="left:1921.40px;top:690.90px;font:700 17.6px/17.6px 'Liberation Sans', sans-serif;color:#111;white-space:pre;">7,5/12,5X290MM</div><div style="left:1957.00px;width:400px;text-align:right;top:690.90px;font:700 17.6px/17.6px 'Liberation Sans', sans-serif;color:#111;white-space:pre;">1</div><div style="left:665px;top:712px;width:1699.5px;height:2px;background:#cfcfcf"></div><div style="left:674.50px;top:717.70px;font:700 17.6px/17.6px 'Liberation Sans', sans-serif;color:#111;white-space:pre;">21</div><div style="left:752.00px;top:716.61px;font:400 18px/18px 'Liberation Mono', monospace;color:#111;white-space:pre;letter-spacing:1.2px;-webkit-text-stroke:0.6px #111;">026 133 522 B</div><div style="left:938.80px;top:717.70px;font:700 17.6px/17.6px 'Liberation Sans', sans-serif;color:#111;white-space:pre;">Schlauch</div><div style="left:1957.00px;width:400px;text-align:right;top:717.70px;font:700 17.6px/17.6px 'Liberation Sans', sans-serif;color:#111;white-space:pre;">1</div><div style="left:665px;top:738px;width:1699.5px;height:2px;background:#cfcfcf"></div><div style="left:674.50px;top:744.50px;font:700 17.6px/17.6px 'Liberation Sans', sans-serif;color:#111;white-space:pre;">25</div><div style="left:752.00px;top:743.41px;font:400 18px/18px 'Liberation Mono', monospace;color:#111;white-space:pre;letter-spacing:1.2px;-webkit-text-stroke:0.6px #111;">034 133 784</div><div style="left:938.80px;top:744.50px;font:700 17.6px/17.6px 'Liberation Sans', sans-serif;color:#111;white-space:pre;">Winkelschlauch</div><div style="left:1921.40px;top:744.50px;font:700 17.6px/17.6px 'Liberation Sans', sans-serif;color:#111;white-space:pre;">3,5MM</div><div style="left:1957.00px;width:400px;text-align:right;top:744.50px;font:700 17.6px/17.6px 'Liberation Sans', sans-serif;color:#111;white-space:pre;">2</div><div style="left:665px;top:765px;width:1699.5px;height:2px;background:#cfcfcf"></div><div style="left:674.50px;top:771.30px;font:700 17.6px/17.6px 'Liberation Sans', sans-serif;color:#111;white-space:pre;">29</div><div style="left:752.00px;top:770.21px;font:400 18px/18px 'Liberation Mono', monospace;color:#111;white-space:pre;letter-spacing:1.2px;-webkit-text-stroke:0.6px #111;">N   011 006 24</div><div style="left:938.80px;top:771.30px;font:700 17.6px/17.6px 'Liberation Sans', sans-serif;color:#111;white-space:pre;">Sechskantmutter</div><div style="left:1921.40px;top:771.30px;font:700 17.6px/17.6px 'Liberation Sans', sans-serif;color:#111;white-space:pre;">M6</div><div style="left:1957.00px;width:400px;text-align:right;top:771.30px;font:700 17.6px/17.6px 'Liberation Sans', sans-serif;color:#111;white-space:pre;">4</div><div style="left:665px;top:792px;width:1699.5px;height:2px;background:#cfcfcf"></div><div style="left:674.50px;top:797.60px;font:700 17.6px/17.6px 'Liberation Sans', sans-serif;color:#111;white-space:pre;">32</div><div style="left:752.00px;top:796.51px;font:400 18px/18px 'Liberation Mono', monospace;color:#111;white-space:pre;letter-spacing:1.2px;-webkit-text-stroke:0.6px #111;">N   011 006 24</div><div style="left:938.80px;top:797.60px;font:700 17.6px/17.6px 'Liberation Sans', sans-serif;color:#111;white-space:pre;">Sechskantmutter</div><div style="left:1921.40px;top:797.60px;font:700 17.6px/17.6px 'Liberation Sans', sans-serif;color:#111;white-space:pre;">M6</div><div style="left:1957.00px;width:400px;text-align:right;top:797.60px;font:700 17.6px/17.6px 'Liberation Sans', sans-serif;color:#111;white-space:pre;">2</div><div style="left:665px;top:818px;width:1699.5px;height:2px;background:#cfcfcf"></div><div style="left:674.50px;top:824.20px;font:700 17.6px/17.6px 'Liberation Sans', sans-serif;color:#111;white-space:pre;">37</div><div style="left:752.00px;top:823.11px;font:400 18px/18px 'Liberation Mono', monospace;color:#111;white-space:pre;letter-spacing:1.2px;-webkit-text-stroke:0.6px #111;">N   906 661 01</div><div style="left:938.80px;top:824.20px;font:700 17.6px/17.6px 'Liberation Sans', sans-serif;color:#111;white-space:pre;">Kabelbinder</div><div style="left:1921.40px;top:824.20px;font:700 17.6px/17.6px 'Liberation Sans', sans-serif;color:#111;white-space:pre;">4,6X200</div><div style="left:1957.00px;width:400px;text-align:right;top:824.20px;font:700 17.6px/17.6px 'Liberation Sans', sans-serif;color:#111;white-space:pre;">1</div><div style="left:665px;top:845px;width:1699.5px;height:2px;background:#cfcfcf"></div><div style="left:674.50px;top:851.20px;font:700 17.6px/17.6px 'Liberation Sans', sans-serif;color:#111;white-space:pre;">37</div><div style="left:752.00px;top:850.11px;font:400 18px/18px 'Liberation Mono', monospace;color:#111;white-space:pre;letter-spacing:1.2px;-webkit-text-stroke:0.6px #111;">867 971 848</div><div style="left:938.80px;top:851.20px;font:700 17.6px/17.6px 'Liberation Sans', sans-serif;color:#111;white-space:pre;">Clip</div><div style="left:1957.00px;width:400px;text-align:right;top:851.20px;font:700 17.6px/17.6px 'Liberation Sans', sans-serif;color:#111;white-space:pre;">1</div><div style="left:665px;top:872px;width:1699.5px;height:2px;background:#cfcfcf"></div><div style="left:665px;top:909.3px;width:1700.5px;height:1.2px;background:#e2e2e2"></div><div style="left:2364.5px;top:314.4px;width:1.2px;height:596px;background:#dcdcdc"></div><div style="left:2310.8px;top:967.2px;width:54.4px;height:33.5px;border:1.5px solid #5b6065;border-radius:4px;background:#f1f1f1;box-sizing:border-box"></div><svg style="position:absolute;left:2310.8px;top:967.2px;" width="54.4" height="33.5" viewBox="0 0 54.4 33.5"><path d="M19.5 4.6H32.5L35.2 7.3V15.8H19.5Z" fill="#4b5157"/><rect x="21.3" y="8" width="11" height="1.8" fill="#a5a9ad"/><rect x="21.3" y="11.3" width="11" height="1.8" fill="#a5a9ad"/><path d="M14.6 14.8H38.5V19.5H37.2V24.8H15.9V19.5H14.6Z" fill="#4b5157"/><path d="M15.9 18.6H37.2" stroke="#cfd1d3" stroke-width="0.9"/><rect x="17" y="25.8" width="19" height="2.6" fill="#4b5157"/></svg><div style="left:1752.3px;top:1040.2px;width:274px;height:29px;border:1px solid #b3bbc6;border-radius:4px;background:#fff;box-sizing:border-box"></div><div style="left:1800.00px;top:1046.51px;font:700 18.3px/18.3px 'Liberation Sans', sans-serif;color:#a8afb8;white-space:pre;">TEILEINFORMATION</div><div style="left:1849.5px;top:1066px;width:5px;height:1.2px;background:#a8afb8"></div><div style="left:2093.6px;top:1040.2px;width:274px;height:29px;border:1.5px solid #4d4d4d;border-radius:4px;background:#f0f0f0;box-sizing:border-box"></div><div style="left:2192.20px;top:1046.68px;font:700 18.1px/18.1px 'Liberation Sans', sans-serif;color:#000;white-space:pre;">ZURÜCK</div><div style="left:2192.5px;top:1066px;width:11.5px;height:1.4px;background:#000"></div>
</body></html>
